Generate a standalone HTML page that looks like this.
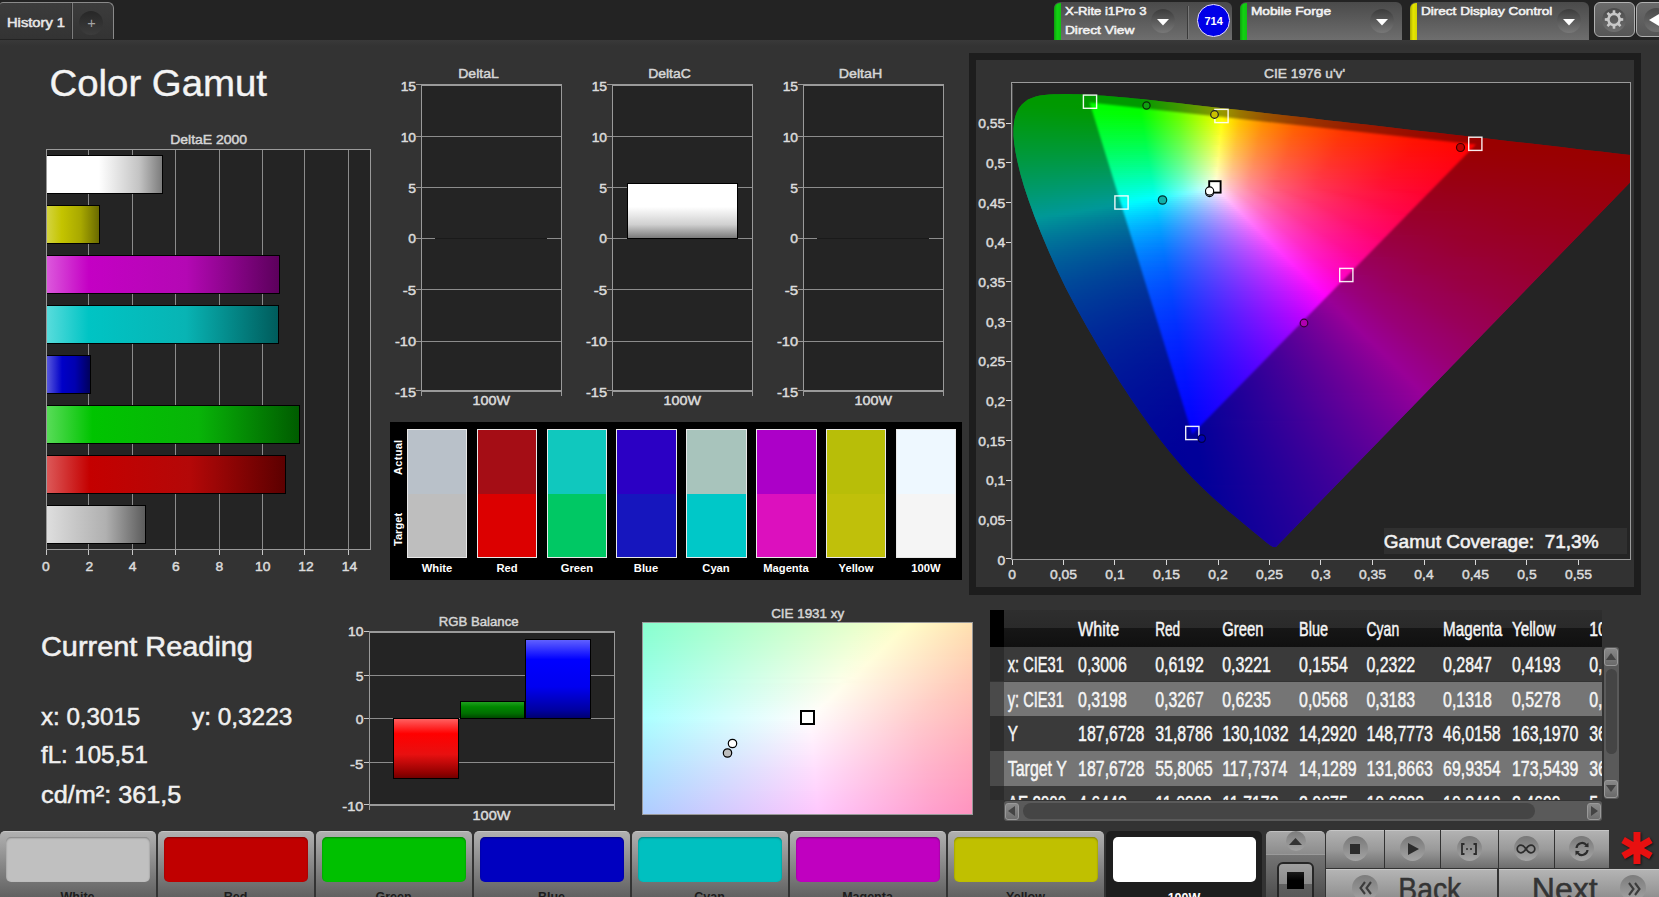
<!DOCTYPE html>
<html><head><meta charset="utf-8"><title>Color Gamut</title>
<style>
html,body{margin:0;padding:0;}
body{width:1659px;height:897px;overflow:hidden;background:#333333;position:relative;font-family:"Liberation Sans",sans-serif;}
.t{position:absolute;white-space:pre;line-height:1;transform-origin:0 0;}
svg{position:absolute;overflow:visible;}
.tx text{white-space:pre;font-family:"Liberation Sans",sans-serif;}
.hs i{position:absolute;left:0;width:100%;height:2px;display:block;}
</style></head><body>
<div style="position:absolute;left:0px;top:0px;width:1659px;height:40px;background:#232323;"></div>
<div style="position:absolute;left:0px;top:40px;width:1659px;height:6px;background:linear-gradient(#393939,#333333);"></div>
<div style="position:absolute;left:0px;top:1.7px;width:114.3px;height:37.5px;background:linear-gradient(#3c3c3c,#333333);border-top:1px solid #8a8a8a;border-right:1px solid #8a8a8a;border-radius:3px 6px 0 0;box-sizing:border-box;"></div>
<div style="position:absolute;left:72px;top:3px;width:1px;height:36px;background:#7c7c7c;"></div>
<div style="position:absolute;left:71px;top:3px;width:1px;height:36px;background:#2e2e2e;"></div>
<div style="position:absolute;left:79.4px;top:10.9px;width:24px;height:24px;border-radius:50%;background:linear-gradient(#272727,#3c3c3c);"></div>
<div style="position:absolute;left:1054px;top:2px;width:178px;height:38px;background:linear-gradient(#4a4a4a,#6e6e6e);border-radius:6px 6px 0 0;"></div>
<div style="position:absolute;left:1054px;top:2.5px;width:7px;height:37.5px;background:linear-gradient(90deg,rgba(0,0,0,0.25),rgba(0,0,0,0) 45%,rgba(0,0,0,0.08)),#12d212;border-radius:6px 0 0 0;"></div>
<div style="position:absolute;left:1151.4px;top:8.9px;width:24px;height:24px;border-radius:50%;background:linear-gradient(#3c3c3c,#787878);"></div>
<svg style="left:1157.4px;top:18.5px" width="12" height="7"><path d="M0 0H12L6 6.6Z" fill="#fff"/></svg>
<div style="position:absolute;left:1187px;top:6px;width:1px;height:33px;background:#3a3a3a;"></div>
<div style="position:absolute;left:1188px;top:6px;width:1px;height:33px;background:#777;"></div>
<div style="position:absolute;left:1197.2px;top:4.3px;width:32.6px;height:32.6px;border-radius:50%;background:#0000e8;border:1.5px solid #e8e0ff;box-sizing:border-box;"></div>
<div style="position:absolute;left:1240px;top:2px;width:162px;height:38px;background:linear-gradient(#4a4a4a,#6e6e6e);border-radius:6px 6px 0 0;"></div>
<div style="position:absolute;left:1240px;top:2.5px;width:7px;height:37.5px;background:linear-gradient(90deg,rgba(0,0,0,0.25),rgba(0,0,0,0) 45%,rgba(0,0,0,0.08)),#12d212;border-radius:6px 0 0 0;"></div>
<div style="position:absolute;left:1370px;top:8.9px;width:24px;height:24px;border-radius:50%;background:linear-gradient(#3c3c3c,#787878);"></div>
<svg style="left:1376px;top:18.5px" width="12" height="7"><path d="M0 0H12L6 6.6Z" fill="#fff"/></svg>
<div style="position:absolute;left:1410px;top:2px;width:179px;height:38px;background:linear-gradient(#4a4a4a,#6e6e6e);border-radius:6px 6px 0 0;"></div>
<div style="position:absolute;left:1410px;top:2.5px;width:7px;height:37.5px;background:linear-gradient(90deg,rgba(0,0,0,0.25),rgba(0,0,0,0) 45%,rgba(0,0,0,0.08)),#e6e600;border-radius:6px 0 0 0;"></div>
<div style="position:absolute;left:1556.8px;top:8.9px;width:24px;height:24px;border-radius:50%;background:linear-gradient(#3c3c3c,#787878);"></div>
<svg style="left:1562.8px;top:18.5px" width="12" height="7"><path d="M0 0H12L6 6.6Z" fill="#fff"/></svg>
<div style="position:absolute;left:1593.5px;top:2px;width:41px;height:34.5px;background:linear-gradient(#6a6a6a,#565656);border:1px solid #b0b0b0;border-radius:6px;box-sizing:border-box;"></div>
<div style="position:absolute;left:1602px;top:7.5px;width:24px;height:24px;border-radius:50%;background:linear-gradient(#4a4a4a,#707070);"></div>
<svg style="left:0;top:0" width="1659" height="60"><path d="M1623.22 18.26 L1623.22 20.74 L1620.76 20.90 L1619.77 23.29 L1621.39 25.14 L1619.64 26.89 L1617.79 25.27 L1615.40 26.26 L1615.24 28.72 L1612.76 28.72 L1612.60 26.26 L1610.21 25.27 L1608.36 26.89 L1606.61 25.14 L1608.23 23.29 L1607.24 20.90 L1604.78 20.74 L1604.78 18.26 L1607.24 18.10 L1608.23 15.71 L1606.61 13.86 L1608.36 12.11 L1610.21 13.73 L1612.60 12.74 L1612.76 10.28 L1615.24 10.28 L1615.40 12.74 L1617.79 13.73 L1619.64 12.11 L1621.39 13.86 L1619.77 15.71 L1620.76 18.10Z M1618.30 19.50 A4.3 4.3 0 1 0 1609.70 19.50 A4.3 4.3 0 1 0 1618.30 19.50Z" fill="#c8c8c8" fill-rule="evenodd"/></svg>
<div style="position:absolute;left:1636px;top:2px;width:41px;height:34.5px;background:linear-gradient(#6a6a6a,#565656);border:1px solid #b0b0b0;border-radius:6px;box-sizing:border-box;"></div>
<div style="position:absolute;left:1643.5px;top:7.5px;width:24px;height:24px;border-radius:50%;background:linear-gradient(#4a4a4a,#707070);"></div>
<svg style="left:1649px;top:13.5px" width="10" height="12"><path d="M0 6L10 0V12Z" fill="#fff"/></svg>
<div style="position:absolute;left:46px;top:149px;width:325px;height:401px;background:#242424;border:1px solid #9a9a9a;box-sizing:border-box;"></div>
<div style="position:absolute;left:88px;top:150px;width:1px;height:399px;background:#8c8c8c;"></div>
<div style="position:absolute;left:88px;top:550px;width:1px;height:5px;background:#c8c8c8;"></div>
<div style="position:absolute;left:132px;top:150px;width:1px;height:399px;background:#8c8c8c;"></div>
<div style="position:absolute;left:132px;top:550px;width:1px;height:5px;background:#c8c8c8;"></div>
<div style="position:absolute;left:175px;top:150px;width:1px;height:399px;background:#8c8c8c;"></div>
<div style="position:absolute;left:175px;top:550px;width:1px;height:5px;background:#c8c8c8;"></div>
<div style="position:absolute;left:219px;top:150px;width:1px;height:399px;background:#8c8c8c;"></div>
<div style="position:absolute;left:219px;top:550px;width:1px;height:5px;background:#c8c8c8;"></div>
<div style="position:absolute;left:262px;top:150px;width:1px;height:399px;background:#8c8c8c;"></div>
<div style="position:absolute;left:262px;top:550px;width:1px;height:5px;background:#c8c8c8;"></div>
<div style="position:absolute;left:304px;top:150px;width:1px;height:399px;background:#8c8c8c;"></div>
<div style="position:absolute;left:304px;top:550px;width:1px;height:5px;background:#c8c8c8;"></div>
<div style="position:absolute;left:348px;top:150px;width:1px;height:399px;background:#8c8c8c;"></div>
<div style="position:absolute;left:348px;top:550px;width:1px;height:5px;background:#c8c8c8;"></div>
<div style="position:absolute;left:46px;top:550px;width:1px;height:5px;background:#c8c8c8;"></div>
<div style="position:absolute;left:47px;top:155px;width:116.09719999999999px;height:38.5px;background:linear-gradient(90deg,#ffffff,#ffffff 45%,#c4c4c4 80%,#7c7c7c);border:1px solid #000;border-left:none;box-sizing:border-box;"></div>
<div style="position:absolute;left:47px;top:205px;width:53.008399999999995px;height:38.5px;background:linear-gradient(90deg,#d4d440,#c4c400 28%,#a8a800 65%,#6a6a00);border:1px solid #000;border-left:none;box-sizing:border-box;"></div>
<div style="position:absolute;left:47px;top:255px;width:232.844px;height:38.5px;background:linear-gradient(90deg,#dc58dc,#c400c4 18%,#b408b4 60%,#5c005c);border:1px solid #000;border-left:none;box-sizing:border-box;"></div>
<div style="position:absolute;left:47px;top:305px;width:231.5432px;height:38.5px;background:linear-gradient(90deg,#58dcdc,#00c4c4 18%,#08b4b4 60%,#005c5c);border:1px solid #000;border-left:none;box-sizing:border-box;"></div>
<div style="position:absolute;left:47px;top:355px;width:43.52340000000001px;height:38.5px;background:linear-gradient(90deg,#5858dc,#0000c8 35%,#0000b0 65%,#00005c);border:1px solid #000;border-left:none;box-sizing:border-box;"></div>
<div style="position:absolute;left:47px;top:405px;width:252.731064px;height:38.5px;background:linear-gradient(90deg,#58dc58,#00c400 18%,#08b408 60%,#005c00);border:1px solid #000;border-left:none;box-sizing:border-box;"></div>
<div style="position:absolute;left:47px;top:455px;width:239.13119999999998px;height:38.5px;background:linear-gradient(90deg,#dc5858,#c40000 18%,#b40808 60%,#5c0000);border:1px solid #000;border-left:none;box-sizing:border-box;"></div>
<div style="position:absolute;left:47px;top:505px;width:99.38842400000001px;height:38.5px;background:linear-gradient(90deg,#dedede,#c6c6c6 30%,#b0b0b0 60%,#5c5c5c);border:1px solid #000;border-left:none;box-sizing:border-box;"></div>
<div style="position:absolute;left:421px;top:84px;width:141px;height:308px;background:#242424;border:1px solid #9a9a9a;border-top:2px solid #9a9a9a;border-bottom:2px solid #9a9a9a;box-sizing:border-box;"></div>
<div style="position:absolute;left:416px;top:84px;width:5px;height:1px;background:#9a9a9a;"></div>
<div style="position:absolute;left:422px;top:136px;width:139px;height:1px;background:#8c8c8c;"></div>
<div style="position:absolute;left:416px;top:136px;width:5px;height:1px;background:#9a9a9a;"></div>
<div style="position:absolute;left:422px;top:187px;width:139px;height:1px;background:#8c8c8c;"></div>
<div style="position:absolute;left:416px;top:187px;width:5px;height:1px;background:#9a9a9a;"></div>
<div style="position:absolute;left:422px;top:238px;width:139px;height:1px;background:#8c8c8c;"></div>
<div style="position:absolute;left:416px;top:238px;width:5px;height:1px;background:#9a9a9a;"></div>
<div style="position:absolute;left:422px;top:289px;width:139px;height:1px;background:#8c8c8c;"></div>
<div style="position:absolute;left:416px;top:289px;width:5px;height:1px;background:#9a9a9a;"></div>
<div style="position:absolute;left:422px;top:341px;width:139px;height:1px;background:#8c8c8c;"></div>
<div style="position:absolute;left:416px;top:341px;width:5px;height:1px;background:#9a9a9a;"></div>
<div style="position:absolute;left:416px;top:390px;width:5px;height:1px;background:#9a9a9a;"></div>
<div style="position:absolute;left:421px;top:392px;width:1px;height:4px;background:#9a9a9a;"></div>
<div style="position:absolute;left:561px;top:392px;width:1px;height:4px;background:#9a9a9a;"></div>
<div style="position:absolute;left:435px;top:238px;width:112px;height:1px;background:#1a1a1a;"></div>
<div style="position:absolute;left:612px;top:84px;width:141px;height:308px;background:#242424;border:1px solid #9a9a9a;border-top:2px solid #9a9a9a;border-bottom:2px solid #9a9a9a;box-sizing:border-box;"></div>
<div style="position:absolute;left:607px;top:84px;width:5px;height:1px;background:#9a9a9a;"></div>
<div style="position:absolute;left:613px;top:136px;width:139px;height:1px;background:#8c8c8c;"></div>
<div style="position:absolute;left:607px;top:136px;width:5px;height:1px;background:#9a9a9a;"></div>
<div style="position:absolute;left:613px;top:187px;width:139px;height:1px;background:#8c8c8c;"></div>
<div style="position:absolute;left:607px;top:187px;width:5px;height:1px;background:#9a9a9a;"></div>
<div style="position:absolute;left:613px;top:238px;width:139px;height:1px;background:#8c8c8c;"></div>
<div style="position:absolute;left:607px;top:238px;width:5px;height:1px;background:#9a9a9a;"></div>
<div style="position:absolute;left:613px;top:289px;width:139px;height:1px;background:#8c8c8c;"></div>
<div style="position:absolute;left:607px;top:289px;width:5px;height:1px;background:#9a9a9a;"></div>
<div style="position:absolute;left:613px;top:341px;width:139px;height:1px;background:#8c8c8c;"></div>
<div style="position:absolute;left:607px;top:341px;width:5px;height:1px;background:#9a9a9a;"></div>
<div style="position:absolute;left:607px;top:390px;width:5px;height:1px;background:#9a9a9a;"></div>
<div style="position:absolute;left:612px;top:392px;width:1px;height:4px;background:#9a9a9a;"></div>
<div style="position:absolute;left:752px;top:392px;width:1px;height:4px;background:#9a9a9a;"></div>
<div style="position:absolute;left:626.5px;top:183px;width:111.5px;height:56px;background:linear-gradient(#fff,#fff 42%,#d0d0d0 75%,#7a7a7a);border:1px solid #000;box-sizing:border-box;"></div>
<div style="position:absolute;left:803px;top:84px;width:141px;height:308px;background:#242424;border:1px solid #9a9a9a;border-top:2px solid #9a9a9a;border-bottom:2px solid #9a9a9a;box-sizing:border-box;"></div>
<div style="position:absolute;left:798px;top:84px;width:5px;height:1px;background:#9a9a9a;"></div>
<div style="position:absolute;left:804px;top:136px;width:139px;height:1px;background:#8c8c8c;"></div>
<div style="position:absolute;left:798px;top:136px;width:5px;height:1px;background:#9a9a9a;"></div>
<div style="position:absolute;left:804px;top:187px;width:139px;height:1px;background:#8c8c8c;"></div>
<div style="position:absolute;left:798px;top:187px;width:5px;height:1px;background:#9a9a9a;"></div>
<div style="position:absolute;left:804px;top:238px;width:139px;height:1px;background:#8c8c8c;"></div>
<div style="position:absolute;left:798px;top:238px;width:5px;height:1px;background:#9a9a9a;"></div>
<div style="position:absolute;left:804px;top:289px;width:139px;height:1px;background:#8c8c8c;"></div>
<div style="position:absolute;left:798px;top:289px;width:5px;height:1px;background:#9a9a9a;"></div>
<div style="position:absolute;left:804px;top:341px;width:139px;height:1px;background:#8c8c8c;"></div>
<div style="position:absolute;left:798px;top:341px;width:5px;height:1px;background:#9a9a9a;"></div>
<div style="position:absolute;left:798px;top:390px;width:5px;height:1px;background:#9a9a9a;"></div>
<div style="position:absolute;left:803px;top:392px;width:1px;height:4px;background:#9a9a9a;"></div>
<div style="position:absolute;left:943px;top:392px;width:1px;height:4px;background:#9a9a9a;"></div>
<div style="position:absolute;left:817px;top:238px;width:112px;height:1px;background:#1a1a1a;"></div>
<div style="position:absolute;left:390px;top:422px;width:572px;height:158px;background:#000;"></div>
<div style="position:absolute;left:407px;top:429px;width:60px;height:129px;background:linear-gradient(#b9c1c9 50.4%,#bebebe 50.4%);border:1px solid #e8e8e8;box-sizing:border-box;"></div>
<div style="position:absolute;left:477px;top:429px;width:60px;height:129px;background:linear-gradient(#a50d15 50.4%,#dc0000 50.4%);border:1px solid #e8e8e8;box-sizing:border-box;"></div>
<div style="position:absolute;left:547px;top:429px;width:60px;height:129px;background:linear-gradient(#10c8be 50.4%,#00c864 50.4%);border:1px solid #e8e8e8;box-sizing:border-box;"></div>
<div style="position:absolute;left:616px;top:429px;width:61px;height:129px;background:linear-gradient(#2b00c4 50.4%,#1616be 50.4%);border:1px solid #e8e8e8;box-sizing:border-box;"></div>
<div style="position:absolute;left:686px;top:429px;width:61px;height:129px;background:linear-gradient(#a8c4bc 50.4%,#00c8c8 50.4%);border:1px solid #e8e8e8;box-sizing:border-box;"></div>
<div style="position:absolute;left:756px;top:429px;width:61px;height:129px;background:linear-gradient(#ac00c8 50.4%,#dc10be 50.4%);border:1px solid #e8e8e8;box-sizing:border-box;"></div>
<div style="position:absolute;left:826px;top:429px;width:60px;height:129px;background:linear-gradient(#b8be08 50.4%,#c0c00a 50.4%);border:1px solid #e8e8e8;box-sizing:border-box;"></div>
<div style="position:absolute;left:896px;top:429px;width:60px;height:129px;background:linear-gradient(#eef8ff 50.4%,#f5f5f5 50.4%);border:1px solid #e8e8e8;box-sizing:border-box;"></div>
<div class="t" style="left:393.3px;top:474.5px;font-size:11.1px;letter-spacing:0.25px;font-weight:bold;color:#fff;transform-origin:0 0;transform:rotate(-90deg);">Actual</div>
<div class="t" style="left:393.3px;top:545.8px;font-size:11.1px;font-weight:bold;color:#fff;transform-origin:0 0;transform:rotate(-90deg);">Target</div>
<div style="position:absolute;left:969px;top:53px;width:672px;height:542px;background:#1d1d1d;"></div>
<div style="position:absolute;left:976px;top:60px;width:658px;height:527px;background:#323232;"></div>
<div style="position:absolute;left:1012px;top:83px;width:619px;height:477px;background:#242424;"></div>
<div class="hs" style="position:absolute;left:1012px;top:83px;width:619px;height:477px;overflow:hidden;"><div style="position:absolute;left:0;top:0;width:619px;height:477px;clip-path:polygon(264.5px 463.5px,264.3px 463.7px,264.0px 464.0px,263.4px 464.1px,262.5px 464.0px,261.3px 463.9px,259.8px 463.3px,258.1px 462.3px,256.1px 460.8px,253.5px 458.7px,250.3px 456.1px,246.4px 452.8px,241.7px 448.9px,235.7px 443.9px,228.8px 438.2px,222.5px 433.1px,217.8px 429.2px,213.8px 425.9px,209.4px 422.1px,204.4px 417.7px,199.1px 412.9px,193.4px 407.6px,187.4px 401.8px,181.1px 395.5px,174.0px 387.9px,166.1px 378.8px,157.5px 368.5px,148.4px 356.9px,138.7px 344.0px,128.6px 329.8px,118.1px 314.5px,107.3px 297.9px,96.2px 280.1px,85.3px 261.8px,74.4px 243.0px,63.7px 223.8px,53.7px 204.8px,44.7px 186.0px,36.4px 167.6px,29.0px 150.0px,22.5px 133.6px,16.9px 118.1px,12.2px 103.9px,8.5px 91.2px,5.7px 79.8px,3.6px 69.6px,2.2px 60.6px,1.5px 52.7px,1.5px 45.7px,2.0px 39.5px,3.1px 34.0px,4.8px 29.3px,6.9px 25.2px,9.6px 21.7px,12.7px 18.9px,16.0px 16.6px,19.8px 14.9px,23.8px 13.6px,28.0px 12.6px,32.5px 12.0px,37.1px 11.6px,41.8px 11.3px,46.7px 11.2px,51.6px 11.1px,56.4px 11.1px,61.3px 11.2px,66.3px 11.3px,71.3px 11.5px,76.4px 11.7px,81.6px 12.0px,87.0px 12.4px,92.5px 12.8px,98.1px 13.2px,103.9px 13.7px,109.9px 14.2px,116.1px 14.8px,122.4px 15.5px,129.0px 16.1px,135.8px 16.8px,142.9px 17.6px,150.2px 18.4px,157.7px 19.2px,165.5px 20.0px,173.5px 20.9px,181.9px 21.9px,190.5px 22.9px,199.5px 23.9px,208.7px 24.9px,218.2px 26.0px,228.0px 27.1px,238.1px 28.3px,248.5px 29.5px,259.2px 30.7px,270.2px 32.0px,281.5px 33.3px,293.1px 34.6px,304.8px 36.0px,316.9px 37.4px,329.1px 38.8px,341.5px 40.2px,354.0px 41.6px,366.6px 43.1px,379.1px 44.5px,391.4px 46.0px,403.5px 47.4px,415.6px 48.7px,427.6px 50.1px,439.5px 51.5px,451.1px 52.8px,461.3px 54.0px,471.1px 55.1px,483.2px 56.5px,499.8px 58.4px,518.7px 60.6px,535.9px 62.6px,549.1px 64.1px,560.7px 65.4px,573.2px 66.9px,588.5px 68.6px,604.7px 70.5px,618.5px 72.1px,628.9px 73.3px,636.8px 74.2px,642.1px 74.8px);"><i style="top:10px;background:linear-gradient(90deg,#00ff00 30px,#00ff00 83px)"></i><i style="top:12px;background:linear-gradient(90deg,#00ff00 20px,#00ff00 109px)"></i><i style="top:14px;background:linear-gradient(90deg,#00ff00 15px,#03ff00 127px,#08ff00 129px)"></i><i style="top:16px;background:linear-gradient(90deg,#00ff00 11px,#02ff00 127px,#36ff00 148px)"></i><i style="top:18px;background:linear-gradient(90deg,#00ff00 9px,#01ff00 127px,#6aff00 167px)"></i><i style="top:20px;background:linear-gradient(90deg,#00ff03 7px,#03ff00 128px,#6dff00 168px,#9eff00 184px)"></i><i style="top:22px;background:linear-gradient(90deg,#00ff07 5px,#00ff00 84px,#02ff00 128px,#69ff00 167px,#d9ff00 201px,#ddff00 202px)"></i><i style="top:24px;background:linear-gradient(90deg,#00ff0a 4px,#00ff00 98px,#01ff00 128px,#69ff00 167px,#d6ff00 200px,#fffe00 211px,#ffde00 220px)"></i><i style="top:26px;background:linear-gradient(90deg,#00ff0e 3px,#00ff00 117px,#03ff00 129px,#6cff00 168px,#daff00 201px,#fffd00 211px,#ffc300 229px,#ffb000 237px)"></i><i style="top:28px;background:linear-gradient(90deg,#00ff11 2px,#02ff00 129px,#6cff00 168px,#dbff00 201px,#fffd00 211px,#ffc200 229px,#ff8d00 254px)"></i><i style="top:30px;background:linear-gradient(90deg,#00ff15 1px,#02ff01 129px,#6cff00 168px,#dbff00 201px,#fffc00 211px,#ffc200 229px,#ff8d00 254px,#ff7200 272px)"></i><i style="top:32px;background:linear-gradient(90deg,#00ff18 1px,#01ff06 129px,#68ff00 167px,#d8ff00 200px,#ffff00 210px,#ffc400 228px,#ff8f00 252px,#ff5f00 287px,#ff5d00 289px)"></i><i style="top:34px;background:linear-gradient(90deg,#00ff1c 0px,#02ff0a 130px,#6bff02 168px,#d8ff00 200px,#fffe00 210px,#ffc300 228px,#ff8e00 252px,#ff5f00 287px,#ff4d00 306px)"></i><i style="top:36px;background:linear-gradient(90deg,#00ff1f 0px,#02ff0f 130px,#6bff07 168px,#d9ff00 200px,#fffe00 210px,#ffc200 228px,#ff8e00 252px,#ff5e00 287px,#ff3e00 324px)"></i><i style="top:38px;background:linear-gradient(90deg,#00ff23 0px,#01ff14 130px,#6bff0d 168px,#d9ff06 200px,#fffd03 210px,#ffc400 227px,#ff8f00 251px,#ff5f00 285px,#ff3600 336px,#ff3300 341px)"></i><i style="top:40px;background:linear-gradient(90deg,#00ff26 0px,#03ff18 131px,#6aff12 168px,#daff0b 200px,#fffc09 210px,#ffc303 227px,#ff8e00 251px,#ff5f00 285px,#ff3500 336px,#ff2800 359px)"></i><i style="top:42px;background:linear-gradient(90deg,#00ff2a 0px,#02ff1d 131px,#6aff17 168px,#d6ff11 199px,#ffff0f 209px,#ffc208 227px,#ff8d02 251px,#ff5e00 285px,#ff3400 336px,#ff2000 376px)"></i><i style="top:44px;background:linear-gradient(90deg,#00ff2e 0px,#01ff22 131px,#6aff1d 168px,#d7ff17 199px,#ffff15 209px,#ffc40e 226px,#ff9007 249px,#ff6000 282px,#ff3700 331px,#ff1800 393px)"></i><i style="top:46px;background:linear-gradient(90deg,#00ff31 0px,#03ff27 132px,#6dff22 169px,#dbff1d 200px,#fffe1c 209px,#ffc313 226px,#ff8f0b 249px,#ff6004 282px,#ff3600 331px,#ff1200 409px,#ff1200 411px)"></i><i style="top:48px;background:linear-gradient(90deg,#00ff35 0px,#02ff2c 132px,#69ff28 168px,#d8ff24 199px,#fffd22 209px,#ffc218 226px,#ff8e0f 249px,#ff5f07 282px,#ff3500 332px,#ff1100 411px,#ff0c00 428px)"></i><i style="top:50px;background:linear-gradient(90deg,#00ff39 0px,#01ff31 132px,#69ff2d 168px,#d8ff2a 199px,#fffc28 209px,#ffc21d 226px,#ff8d13 249px,#ff5e0a 282px,#ff3402 332px,#ff1100 411px,#ff0700 445px)"></i><i style="top:52px;background:linear-gradient(90deg,#00ff3c 0px,#03ff36 133px,#6cff33 169px,#d9ff30 199px,#feff2f 208px,#ffc122 226px,#ff8c17 249px,#ff5d0d 282px,#ff3404 332px,#ff1000 412px,#ff0200 463px)"></i><i style="top:54px;background:linear-gradient(90deg,#00ff40 0px,#02ff3b 133px,#6cff39 169px,#d9ff37 199px,#ffff36 208px,#ffc628 224px,#ff911c 246px,#ff6111 278px,#ff3808 325px,#ff1300 400px,#ff0000 480px)"></i><i style="top:56px;background:linear-gradient(90deg,#00ff44 0px,#01ff40 133px,#68ff3f 168px,#d6ff3d 198px,#fffe3c 208px,#ffc52e 224px,#ff9021 246px,#ff6015 278px,#ff370a 325px,#ff1301 400px,#ff0000 481px,#ff0000 498px)"></i><i style="top:58px;background:linear-gradient(90deg,#00ff48 0px,#03ff45 134px,#6bff45 169px,#daff44 199px,#fffd43 208px,#ffc433 224px,#ff8f25 246px,#ff6018 278px,#ff360c 326px,#ff1203 402px,#ff0000 479px,#ff0000 515px)"></i><i style="top:60px;background:linear-gradient(90deg,#00ff4b 0px,#02ff4b 134px,#6bff4b 169px,#dbff4a 199px,#fffc49 208px,#ffc339 224px,#ff8f29 246px,#ff5f1b 278px,#ff350f 326px,#ff1104 402px,#ff0000 477px,#ff0000 532px)"></i><i style="top:62px;background:linear-gradient(90deg,#00ff4f 0px,#01ff50 134px,#6bff51 169px,#d7ff51 198px,#feff51 207px,#ffc23e 224px,#ff8e2e 246px,#ff5e1f 278px,#ff3411 326px,#ff1106 402px,#ff0000 476px,#ff0000 550px)"></i><i style="top:64px;background:linear-gradient(90deg,#00ff53 0px,#00ff56 134px,#67ff57 168px,#d4ff58 197px,#ffff58 207px,#ffc445 223px,#ff8f33 245px,#ff6023 276px,#ff3615 323px,#ff1209 397px,#ff0002 473px,#ff0000 567px)"></i><i style="top:66px;background:linear-gradient(90deg,#00ff57 1px,#02ff5b 135px,#6aff5d 169px,#d8ff5f 198px,#fffe5f 207px,#ffc34a 223px,#ff8e37 245px,#ff5f26 276px,#ff3517 323px,#ff110a 398px,#ff0003 471px,#ff0000 585px)"></i><i style="top:68px;background:linear-gradient(90deg,#00ff5b 1px,#01ff61 135px,#6aff63 169px,#d9ff66 198px,#fffd66 207px,#ffc250 223px,#ff8d3b 245px,#ff5e2a 276px,#ff341a 323px,#ff100c 398px,#ff0005 469px,#ff0000 602px)"></i><i style="top:70px;background:linear-gradient(90deg,#00ff5f 1px,#00ff67 135px,#6aff6a 169px,#d9ff6d 198px,#fffd6d 207px,#ffc155 223px,#ff8c40 245px,#ff5d2d 276px,#ff341c 323px,#ff100e 398px,#ff0006 468px,#ff0000 618px)"></i><i style="top:72px;background:linear-gradient(90deg,#00ff63 2px,#02ff6d 136px,#69ff70 169px,#d6ff74 197px,#fffc74 207px,#ffc05b 223px,#ff8b44 245px,#ff5c30 276px,#ff331f 323px,#ff0f10 398px,#ff0008 466px,#ff0000 618px)"></i><i style="top:74px;background:linear-gradient(90deg,#00ff67 2px,#01ff73 136px,#69ff77 169px,#d6ff7c 197px,#ffff7d 206px,#ffc362 222px,#ff8e4b 243px,#ff5f36 273px,#ff3623 318px,#ff1213 390px,#ff000a 463px,#ff0000 618px)"></i><i style="top:76px;background:linear-gradient(90deg,#00ff6b 2px,#01ff79 136px,#69ff7e 169px,#d7ff83 197px,#ffff85 206px,#ffc56a 221px,#ff8f50 242px,#ff603a 272px,#ff3626 317px,#ff1215 388px,#ff000b 461px,#ff0000 618px)"></i><i style="top:78px;background:linear-gradient(90deg,#00ff70 3px,#03ff7f 137px,#6cff85 170px,#dcff8b 198px,#fffe8c 206px,#ffc470 221px,#ff8e55 242px,#ff5f3d 272px,#ff3529 317px,#ff1117 388px,#ff000d 459px,#ff0001 618px)"></i><i style="top:80px;background:linear-gradient(90deg,#00ff74 3px,#02ff85 137px,#68ff8b 169px,#d8ff92 197px,#fffd94 206px,#ffc376 221px,#ff8d5a 242px,#ff5e41 272px,#ff342b 317px,#ff1019 389px,#ff000f 457px,#ff0002 618px)"></i><i style="top:82px;background:linear-gradient(90deg,#00ff78 4px,#01ff8b 137px,#68ff92 169px,#d4ff9a 196px,#fffc9b 206px,#ffc27c 221px,#ff8d5f 242px,#ff5d45 272px,#ff332e 317px,#ff101b 389px,#ff0010 455px,#ff0003 618px)"></i><i style="top:84px;background:linear-gradient(90deg,#00ff7d 4px,#03ff92 138px,#6bff9a 170px,#d9ffa2 197px,#feffa5 205px,#ffc182 221px,#ff8c63 242px,#ff5c48 272px,#ff3331 317px,#ff0f1c 389px,#ff0012 453px,#ff0004 618px)"></i><i style="top:86px;background:linear-gradient(90deg,#00ff81 5px,#02ff98 138px,#6bffa1 170px,#daffaa 197px,#ffffad 205px,#ffc38a 220px,#ff8f6b 240px,#ff5f4e 269px,#ff3636 312px,#ff1220 381px,#ff0014 451px,#ff0005 618px)"></i><i style="top:88px;background:linear-gradient(90deg,#00ff85 5px,#01ff9f 138px,#6bffa8 170px,#daffb3 197px,#fffeb5 205px,#ffc692 219px,#ff9071 239px,#ff6154 267px,#ff373a 309px,#ff1323 376px,#ff0016 448px,#ff0006 618px)"></i><i style="top:90px;background:linear-gradient(90deg,#00ff8a 6px,#03ffa5 139px,#6affb0 170px,#d6ffba 196px,#fffdbd 205px,#ffc599 219px,#ff8f76 239px,#ff6058 267px,#ff363d 309px,#ff1225 376px,#ff0018 446px,#ff0007 618px)"></i><i style="top:92px;background:linear-gradient(90deg,#00ff8e 6px,#02ffac 139px,#6affb7 170px,#d7ffc3 196px,#fffcc5 205px,#ffc49f 219px,#ff8e7b 239px,#ff5f5b 267px,#ff3640 309px,#ff1227 376px,#ff001a 444px,#ff0008 618px)"></i><i style="top:94px;background:linear-gradient(90deg,#00ff93 7px,#01ffb3 139px,#6affbf 170px,#d7ffcc 196px,#feffd0 204px,#ffbfa3 220px,#ff8b7f 240px,#ff5c5e 269px,#ff3341 312px,#ff0f28 381px,#ff001b 443px,#ff0009 618px)"></i><i style="top:96px;background:linear-gradient(90deg,#00ff98 7px,#00ffb9 136px,#03ffba 140px,#6affc7 170px,#d8ffd4 196px,#ffffd9 204px,#ffc5af 218px,#ff9089 237px,#ff6166 264px,#ff3748 305px,#ff132d 370px,#ff001d 440px,#ff000a 618px)"></i><i style="top:98px;background:linear-gradient(90deg,#00ff9d 8px,#00ffbe 133px,#02ffc1 140px,#69ffcf 170px,#d8ffdd 196px,#fffee2 204px,#ffc4b6 218px,#ff8f8e 237px,#ff606a 264px,#ff364b 305px,#ff122f 370px,#ff001f 438px,#ff000b 618px)"></i><i style="top:100px;background:linear-gradient(90deg,#00ffa1 9px,#00ffc4 130px,#01ffc8 140px,#69ffd7 170px,#d4ffe6 195px,#fffdea 204px,#ffc3bc 218px,#ff8e93 237px,#ff606e 264px,#ff364e 305px,#ff1231 370px,#ff0021 436px,#ff000c 618px)"></i><i style="top:102px;background:linear-gradient(90deg,#00ffa6 9px,#00ffca 127px,#03ffd0 141px,#6dffdf 171px,#daffef 196px,#fffcf3 204px,#ffc2c3 218px,#ff8d99 237px,#ff5f73 264px,#ff3551 305px,#ff1134 370px,#ff0023 434px,#ff000d 617px)"></i><i style="top:104px;background:linear-gradient(90deg,#00ffab 10px,#00ffd0 125px,#02ffd7 141px,#6cffe8 171px,#dafff9 196px,#fefffe 203px,#ffc1ca 218px,#ff8c9e 237px,#ff5e77 264px,#ff3454 305px,#ff1136 370px,#ff0026 432px,#ff000f 615px)"></i><i style="top:106px;background:linear-gradient(90deg,#00ffb0 10px,#00ffd5 122px,#01ffdf 141px,#68ffef 170px,#d8fcff 196px,#fef4ff 205px,#ffb9cb 220px,#ff859e 240px,#ff5675 269px,#ff2e52 312px,#ff0b34 382px,#ff0027 433px,#ff0010 613px)"></i><i style="top:108px;background:linear-gradient(90deg,#00ffb5 11px,#00ffdb 120px,#00ffe6 141px,#68fff8 170px,#a9faff 186px,#feeaff 207px,#ffafca 223px,#ff7c9c 244px,#ff4e73 275px,#ff274f 322px,#ff0531 399px,#ff0027 442px,#ff0011 611px)"></i><i style="top:110px;background:linear-gradient(90deg,#00ffba 12px,#00ffe1 118px,#02ffee 142px,#6efcff 172px,#fee0ff 209px,#ffa5c8 226px,#ff749a 248px,#ff4872 280px,#ff214e 330px,#ff012f 413px,#ff0015 574px,#ff0012 609px)"></i><i style="top:112px;background:linear-gradient(90deg,#00ffbf 12px,#00ffe7 116px,#01fff6 142px,#46fbff 162px,#fed6ff 211px,#ff9ec9 228px,#ff6d9a 251px,#ff4270 285px,#ff1c4c 338px,#ff0030 417px,#ff0016 579px,#ff0013 607px)"></i><i style="top:114px;background:linear-gradient(90deg,#00ffc5 13px,#00ffed 114px,#00fffe 142px,#bddaff 196px,#ffcafc 214px,#ff95c8 231px,#ff6699 255px,#ff3c6e 291px,#ff174a 348px,#ff0031 419px,#ff0017 580px,#ff0014 606px)"></i><i style="top:116px;background:linear-gradient(90deg,#00ffca 14px,#00fff4 113px,#00fbff 138px,#02f8ff 143px,#bfd1ff 198px,#ffc1fc 216px,#ff8dc6 234px,#ff5f97 259px,#ff366d 297px,#ff1248 357px,#ff0033 420px,#ff0018 579px,#ff0016 604px)"></i><i style="top:118px;background:linear-gradient(90deg,#00ffcf 14px,#00fff9 110px,#00f8ff 130px,#01f0ff 143px,#bdc9ff 199px,#ffb9fc 218px,#ff87c7 236px,#ff5a97 262px,#ff326d 300px,#ff1049 361px,#ff0035 418px,#ff001a 572px,#ff0017 602px)"></i><i style="top:120px;background:linear-gradient(90deg,#00ffd5 15px,#00fcff 112px,#00e9ff 143px,#bec1ff 201px,#ffb1fc 220px,#ff80c6 239px,#ff5496 266px,#ff2d6c 306px,#ff0c47 369px,#ff0037 418px,#ff001b 570px,#ff0018 600px)"></i><i style="top:122px;background:linear-gradient(90deg,#00ffdb 16px,#00fcff 101px,#02e2ff 144px,#bfbaff 203px,#ffaafc 222px,#ff7bc7 241px,#ff5097 268px,#ff2b6d 308px,#ff0b49 371px,#ff0039 416px,#ff001d 563px,#ff0019 598px)"></i><i style="top:124px;background:linear-gradient(90deg,#00ffe0 17px,#00fcff 89px,#01dbff 144px,#bdb3ff 204px,#ffa3fc 224px,#ff76c8 243px,#ff4d99 270px,#ff286e 311px,#ff0949 375px,#ff003b 416px,#ff001f 561px,#ff001b 596px)"></i><i style="top:126px;background:linear-gradient(90deg,#00ffe6 17px,#00fcff 77px,#00d5ff 144px,#bfacff 206px,#ff9cfd 226px,#ff6fc7 246px,#ff4797 274px,#ff246d 316px,#ff0649 382px,#ff003b 421px,#ff001f 568px,#ff001c 594px)"></i><i style="top:128px;background:linear-gradient(90deg,#00ffec 18px,#00fbff 66px,#02ceff 145px,#c0a5ff 208px,#ff95fd 228px,#ff6ac8 248px,#ff4397 277px,#ff216d 320px,#ff0348 388px,#ff002a 505px,#ff001d 592px)"></i><i style="top:130px;background:linear-gradient(90deg,#00fff2 19px,#00fcff 54px,#01c9ff 145px,#be9fff 209px,#ff8ffd 230px,#ff64c6 251px,#ff3f97 280px,#ff1e6d 324px,#ff0148 393px,#ff002a 512px,#ff001f 590px)"></i><i style="top:132px;background:linear-gradient(90deg,#00fff7 19px,#00faff 45px,#00c3ff 145px,#bc99ff 210px,#ff89fd 232px,#ff60c7 253px,#ff3b97 283px,#ff1b6d 328px,#ff0048 399px,#ff0029 521px,#ff0020 588px)"></i><i style="top:134px;background:linear-gradient(90deg,#00fffd 20px,#02bdff 146px,#c093ff 213px,#ff83fd 234px,#ff5cc8 255px,#ff3899 285px,#ff196e 330px,#ff004a 398px,#ff002b 517px,#ff0021 586px)"></i><i style="top:136px;background:linear-gradient(90deg,#00faff 21px,#01b8ff 146px,#bf8dff 214px,#ff7dfd 236px,#ff56c7 258px,#ff3497 289px,#ff156d 335px,#ff004c 398px,#ff002d 515px,#ff0023 584px)"></i><i style="top:138px;background:linear-gradient(90deg,#00f4ff 22px,#03b3ff 147px,#c088ff 216px,#ff78fd 238px,#ff53c8 260px,#ff3199 291px,#ff136e 338px,#ff004f 397px,#ff002f 512px,#ff0024 582px)"></i><i style="top:140px;background:linear-gradient(90deg,#00efff 23px,#02aeff 147px,#be83ff 217px,#ff73fd 240px,#ff4ec7 263px,#ff2d97 295px,#ff106d 343px,#ff0051 396px,#ff0031 509px,#ff0025 580px)"></i><i style="top:142px;background:linear-gradient(90deg,#00e9ff 23px,#01a9ff 147px,#bf7eff 219px,#ff6efd 242px,#ff4ac8 265px,#ff2a97 298px,#ff0e6d 347px,#ff0054 394px,#ff0033 504px,#ff0027 578px)"></i><i style="top:144px;background:linear-gradient(90deg,#00e4ff 24px,#03a4ff 148px,#c079ff 221px,#ff69fd 244px,#ff47c8 267px,#ff2898 300px,#ff0c6e 349px,#ff0056 393px,#ff0036 500px,#ff0028 576px)"></i><i style="top:146px;background:linear-gradient(90deg,#00dfff 25px,#02a0ff 148px,#be74ff 222px,#ff64fd 246px,#ff42c7 270px,#ff2497 304px,#ff096d 355px,#ff0059 393px,#ff0037 499px,#ff002a 574px)"></i><i style="top:148px;background:linear-gradient(90deg,#00daff 26px,#019cff 148px,#bf6fff 224px,#ff5ffd 248px,#ff3fc8 272px,#ff2298 306px,#ff086e 357px,#ff005b 393px,#ff0039 498px,#ff002b 572px)"></i><i style="top:150px;background:linear-gradient(90deg,#00d5ff 26px,#0398ff 149px,#c06bff 226px,#ff5bfd 250px,#ff3bc7 275px,#ff1e97 310px,#ff056d 362px,#ff005a 399px,#ff0038 506px,#ff002c 571px)"></i><i style="top:152px;background:linear-gradient(90deg,#00d0ff 27px,#0294ff 149px,#bf67ff 227px,#ff57fd 252px,#ff38c8 277px,#ff1b97 313px,#ff036d 366px,#ff0049 450px,#ff002e 569px)"></i><i style="top:154px;background:linear-gradient(90deg,#00cbff 28px,#0190ff 149px,#bd63ff 228px,#ff53fd 254px,#ff34c7 280px,#ff1997 316px,#ff016d 370px,#ff0049 455px,#ff002f 567px)"></i><i style="top:156px;background:linear-gradient(90deg,#00c7ff 29px,#038cff 150px,#c15eff 231px,#ff4ffd 256px,#ff31c8 282px,#ff1697 319px,#ff006d 374px,#ff0048 461px,#ff0031 565px)"></i><i style="top:158px;background:linear-gradient(90deg,#00c2ff 30px,#0289ff 150px,#bf5bff 232px,#ff4bfd 258px,#ff2ec8 284px,#ff1498 321px,#ff006e 376px,#ff0049 463px,#ff0032 563px)"></i><i style="top:160px;background:linear-gradient(90deg,#00beff 31px,#0185ff 150px,#be58ff 233px,#ff47fe 260px,#ff2bc7 287px,#ff1197 325px,#ff0071 375px,#ff004c 460px,#ff0034 561px)"></i><i style="top:162px;background:linear-gradient(90deg,#00baff 32px,#0382ff 151px,#c153ff 236px,#ff43fe 262px,#ff28c8 289px,#ff0f97 328px,#ff0074 373px,#ff004f 456px,#ff0035 559px)"></i><i style="top:164px;background:linear-gradient(90deg,#00b6ff 32px,#027eff 151px,#c050ff 237px,#ff40fe 264px,#ff25c7 292px,#ff0d97 331px,#ff0077 372px,#ff0051 454px,#ff0037 557px)"></i><i style="top:166px;background:linear-gradient(90deg,#00b2ff 33px,#017bff 151px,#be4dff 238px,#ff3cfe 266px,#ff22c8 294px,#ff0b97 334px,#ff007a 371px,#ff0054 451px,#ff0039 555px)"></i><i style="top:168px;background:linear-gradient(90deg,#00aeff 34px,#0378ff 152px,#bf49ff 240px,#ff39fe 268px,#ff20c9 296px,#ff0998 336px,#ff007d 370px,#ff0056 449px,#ff003a 553px)"></i><i style="top:170px;background:linear-gradient(90deg,#00abff 35px,#0275ff 152px,#c046ff 242px,#ff36fe 270px,#ff1dc8 299px,#ff0798 340px,#ff007f 371px,#ff0058 449px,#ff003c 551px)"></i><i style="top:172px;background:linear-gradient(90deg,#00a7ff 36px,#0172ff 152px,#bf43ff 243px,#ff33fe 272px,#ff1bc8 301px,#ff0598 342px,#ff007f 374px,#ff0058 453px,#ff003e 549px)"></i><i style="top:174px;background:linear-gradient(90deg,#00a3ff 37px,#036fff 153px,#c040ff 245px,#ff2ffe 274px,#ff18c7 304px,#ff0398 346px,#ff006d 409px,#ff0049 508px,#ff003f 547px)"></i><i style="top:176px;background:linear-gradient(90deg,#00a0ff 38px,#026dff 153px,#c03dff 247px,#ff2cfe 276px,#ff15c8 306px,#ff0198 349px,#ff006d 413px,#ff0048 514px,#ff0041 545px)"></i><i style="top:178px;background:linear-gradient(90deg,#009cff 39px,#016aff 153px,#bf3aff 248px,#ff2afe 278px,#ff13c9 308px,#ff0098 351px,#ff006e 415px,#ff0049 516px,#ff0043 543px)"></i><i style="top:180px;background:linear-gradient(90deg,#0099ff 39px,#0367ff 154px,#c037ff 250px,#ff27fe 280px,#ff11c8 311px,#ff0098 354px,#ff006e 419px,#ff0049 521px,#ff0044 541px)"></i><i style="top:182px;background:linear-gradient(90deg,#0096ff 40px,#0265ff 154px,#bf35ff 251px,#ff24fe 282px,#ff0fc8 313px,#ff009c 353px,#ff0071 417px,#ff004c 517px,#ff0046 539px)"></i><i style="top:184px;background:linear-gradient(90deg,#0093ff 41px,#0162ff 154px,#bf32ff 253px,#ff20fc 285px,#ff0cc6 317px,#ff009f 352px,#ff0074 414px,#ff004f 511px,#ff0048 538px)"></i><i style="top:186px;background:linear-gradient(90deg,#0090ff 42px,#0260ff 155px,#c02fff 255px,#ff1efc 287px,#ff09c6 320px,#ff00a3 351px,#ff0077 412px,#ff0051 507px,#ff0049 536px)"></i><i style="top:188px;background:linear-gradient(90deg,#008dff 43px,#025dff 155px,#bf2dff 256px,#ff1bfc 289px,#ff08c6 322px,#ff00a7 350px,#ff007a 410px,#ff0054 503px,#ff004b 534px)"></i><i style="top:190px;background:linear-gradient(90deg,#008aff 44px,#035bff 156px,#c02aff 258px,#ff19fc 291px,#ff06c7 324px,#ff00a7 352px,#ff007b 413px,#ff0054 507px,#ff004d 532px)"></i><i style="top:192px;background:linear-gradient(90deg,#0087ff 45px,#0259ff 156px,#c028ff 260px,#ff16fc 293px,#ff04c6 327px,#ff0096 375px,#ff006c 447px,#ff004f 530px)"></i><i style="top:194px;background:linear-gradient(90deg,#0084ff 46px,#0257ff 156px,#bf26ff 261px,#ff14fc 295px,#ff02c7 329px,#ff0097 377px,#ff006c 449px,#ff0051 528px)"></i><i style="top:196px;background:linear-gradient(90deg,#0081ff 47px,#0354ff 157px,#c023ff 263px,#ff12fc 297px,#ff00c6 332px,#ff0096 381px,#ff006c 454px,#ff0053 526px)"></i><i style="top:198px;background:linear-gradient(90deg,#007eff 48px,#0252ff 157px,#c121ff 265px,#ff10fc 299px,#ff00c6 334px,#ff0096 384px,#ff006c 458px,#ff0055 524px)"></i><i style="top:200px;background:linear-gradient(90deg,#007cff 49px,#0250ff 157px,#c01fff 266px,#ff0dfc 301px,#ff00c8 335px,#ff0098 385px,#ff006d 459px,#ff0057 522px)"></i><i style="top:202px;background:linear-gradient(90deg,#0079ff 50px,#034eff 158px,#c01dff 268px,#ff0bfc 303px,#ff00ce 333px,#ff009d 381px,#ff0072 452px,#ff0059 520px)"></i><i style="top:204px;background:linear-gradient(90deg,#0077ff 51px,#024cff 158px,#bf1bff 269px,#ff09fc 305px,#ff00d2 332px,#ff00a1 379px,#ff0075 449px,#ff005b 518px)"></i><i style="top:206px;background:linear-gradient(90deg,#0074ff 52px,#024aff 158px,#c019ff 271px,#ff07fc 307px,#ff00d5 332px,#ff00a3 379px,#ff0077 448px,#ff005d 516px)"></i><i style="top:208px;background:linear-gradient(90deg,#0072ff 53px,#0348ff 159px,#c016ff 273px,#ff05fc 309px,#ff00d4 335px,#ff00a2 383px,#ff0077 453px,#ff005f 514px)"></i><i style="top:210px;background:linear-gradient(90deg,#006fff 54px,#0247ff 159px,#bf15ff 274px,#ff03fc 311px,#ff00c7 348px,#ff0097 401px,#ff006d 480px,#ff0061 512px)"></i><i style="top:212px;background:linear-gradient(90deg,#006dff 55px,#0245ff 159px,#c013ff 276px,#ff01fd 313px,#ff00c6 351px,#ff0096 405px,#ff006c 485px,#ff0063 510px)"></i><i style="top:214px;background:linear-gradient(90deg,#006bff 56px,#0343ff 160px,#c111ff 278px,#ff00fd 315px,#ff00c7 353px,#ff0097 407px,#ff006c 488px,#ff0065 508px)"></i><i style="top:216px;background:linear-gradient(90deg,#0068ff 57px,#0241ff 160px,#c00fff 279px,#ff00fd 317px,#ff00c6 356px,#ff0096 411px,#ff006c 493px,#ff0067 506px)"></i><i style="top:218px;background:linear-gradient(90deg,#0066ff 58px,#0240ff 160px,#c00dff 281px,#ff00fe 318px,#ff00c8 357px,#ff0098 412px,#ff006d 494px,#ff0069 505px)"></i><i style="top:220px;background:linear-gradient(90deg,#0064ff 59px,#033eff 161px,#c10bff 283px,#fa00ff 317px,#ff00f6 325px,#ff00c1 366px,#ff0091 425px,#ff006b 503px)"></i><i style="top:222px;background:linear-gradient(90deg,#0062ff 60px,#023dff 161px,#c00aff 284px,#f400ff 315px,#ff00fb 324px,#ff00c6 364px,#ff0096 421px,#ff006d 501px)"></i><i style="top:224px;background:linear-gradient(90deg,#0060ff 61px,#023bff 161px,#bf08ff 285px,#ef00ff 314px,#ff00fb 326px,#ff00c5 367px,#ff0095 425px,#ff0070 499px)"></i><i style="top:226px;background:linear-gradient(90deg,#005eff 62px,#0339ff 162px,#c106ff 288px,#ed00ff 315px,#ff00fb 328px,#ff00c6 369px,#ff0096 427px,#ff0072 497px)"></i><i style="top:228px;background:linear-gradient(90deg,#005bff 64px,#0238ff 162px,#c005ff 289px,#f100ff 319px,#ff00fb 330px,#ff00c5 372px,#ff0095 431px,#ff0074 495px)"></i><i style="top:230px;background:linear-gradient(90deg,#0059ff 65px,#0237ff 162px,#bf03ff 290px,#ff00fd 331px,#ff00c6 373px,#ff0096 432px,#ff0077 493px)"></i><i style="top:232px;background:linear-gradient(90deg,#0057ff 66px,#0335ff 163px,#c002ff 292px,#ff00fd 333px,#ff00c7 375px,#ff0096 435px,#ff0079 491px)"></i><i style="top:234px;background:linear-gradient(90deg,#0055ff 67px,#0234ff 163px,#c000ff 294px,#ff00fd 335px,#ff00c7 377px,#ff0097 437px,#ff007c 489px)"></i><i style="top:236px;background:linear-gradient(90deg,#0054ff 68px,#0232ff 163px,#bf00ff 295px,#ff00fd 337px,#ff00c7 380px,#ff0097 441px,#ff007e 487px)"></i><i style="top:238px;background:linear-gradient(90deg,#0052ff 69px,#0331ff 164px,#c000ff 297px,#ff00fd 339px,#ff00c7 382px,#ff0097 443px,#ff0081 485px)"></i><i style="top:240px;background:linear-gradient(90deg,#0050ff 70px,#022fff 164px,#bc00ff 296px,#ff00fd 341px,#ff00c7 385px,#ff0097 447px,#ff0083 483px)"></i><i style="top:242px;background:linear-gradient(90deg,#004eff 71px,#032eff 165px,#b700ff 294px,#ff00fd 343px,#ff00c7 387px,#ff0097 450px,#ff0086 481px)"></i><i style="top:244px;background:linear-gradient(90deg,#004cff 72px,#032dff 165px,#b300ff 293px,#ff00fd 345px,#ff00c7 389px,#ff0097 452px,#ff0088 479px)"></i><i style="top:246px;background:linear-gradient(90deg,#004aff 74px,#022cff 165px,#ae00ff 291px,#ff00fd 347px,#ff00c7 392px,#ff0097 456px,#ff008b 477px)"></i><i style="top:248px;background:linear-gradient(90deg,#0049ff 75px,#032aff 166px,#a900ff 289px,#ff00fd 349px,#ff00c7 394px,#ff0097 458px,#ff008e 475px)"></i><i style="top:250px;background:linear-gradient(90deg,#0047ff 76px,#0329ff 166px,#a400ff 287px,#ff00fd 351px,#ff00c7 397px,#ff0097 462px,#ff0090 473px)"></i><i style="top:252px;background:linear-gradient(90deg,#0045ff 77px,#0228ff 166px,#9f00ff 285px,#ff00fd 353px,#ff00c7 399px,#ff0097 464px,#ff0093 471px)"></i><i style="top:254px;background:linear-gradient(90deg,#0044ff 78px,#0327ff 167px,#9b00ff 283px,#ff00fd 355px,#ff00c8 401px,#ff0097 467px,#ff0096 470px)"></i><i style="top:256px;background:linear-gradient(90deg,#0042ff 79px,#0325ff 167px,#9600ff 281px,#ff00fd 357px,#ff00c7 404px,#ff0098 468px)"></i><i style="top:258px;background:linear-gradient(90deg,#0040ff 81px,#0224ff 167px,#9300ff 280px,#ff00fd 359px,#ff00c7 406px,#ff009b 466px)"></i><i style="top:260px;background:linear-gradient(90deg,#003fff 82px,#0323ff 168px,#8e00ff 278px,#ff00fc 362px,#ff00c6 410px,#ff009e 464px)"></i><i style="top:262px;background:linear-gradient(90deg,#003dff 83px,#0322ff 168px,#8a00ff 276px,#ff00fc 364px,#ff00c6 412px,#ff00a1 462px)"></i><i style="top:264px;background:linear-gradient(90deg,#003cff 84px,#0221ff 168px,#8600ff 274px,#ff00fc 366px,#ff00c6 415px,#ff00a4 460px)"></i><i style="top:266px;background:linear-gradient(90deg,#003aff 85px,#0320ff 169px,#8200ff 272px,#ff00fc 368px,#ff00c6 417px,#ff00a7 458px)"></i><i style="top:268px;background:linear-gradient(90deg,#0039ff 87px,#021fff 169px,#7e00ff 270px,#ff00fc 370px,#ff00c6 420px,#ff00aa 456px)"></i><i style="top:270px;background:linear-gradient(90deg,#0037ff 88px,#021eff 169px,#7a00ff 268px,#ff00fc 372px,#ff00c6 422px,#ff00ae 454px)"></i><i style="top:272px;background:linear-gradient(90deg,#0036ff 89px,#031dff 170px,#7700ff 267px,#ff00fc 374px,#ff00c6 425px,#ff00b1 452px)"></i><i style="top:274px;background:linear-gradient(90deg,#0035ff 90px,#021cff 170px,#7300ff 265px,#ff00fc 376px,#ff00c6 427px,#ff00b4 450px)"></i><i style="top:276px;background:linear-gradient(90deg,#0033ff 91px,#021bff 170px,#6f00ff 263px,#ff00fc 378px,#ff00c7 429px,#ff00b8 448px)"></i><i style="top:278px;background:linear-gradient(90deg,#0032ff 93px,#031aff 171px,#6b00ff 261px,#ff00fc 380px,#ff00c6 432px,#ff00bb 446px)"></i><i style="top:280px;background:linear-gradient(90deg,#0030ff 94px,#0219ff 171px,#6800ff 259px,#ff00fc 382px,#ff00c6 434px,#ff00be 444px)"></i><i style="top:282px;background:linear-gradient(90deg,#002fff 95px,#0218ff 171px,#6400ff 257px,#ff00fc 384px,#ff00c6 437px,#ff00c2 442px)"></i><i style="top:284px;background:linear-gradient(90deg,#002eff 96px,#0317ff 172px,#6200ff 256px,#ff00fc 386px,#ff00c6 439px,#ff00c6 440px)"></i><i style="top:286px;background:linear-gradient(90deg,#002dff 97px,#0216ff 172px,#5e00ff 254px,#ff00fc 388px,#ff00c9 438px)"></i><i style="top:288px;background:linear-gradient(90deg,#002bff 99px,#0315ff 173px,#5b00ff 252px,#ff00fc 390px,#ff00cc 437px)"></i><i style="top:290px;background:linear-gradient(90deg,#002aff 100px,#0314ff 173px,#5800ff 250px,#ff00fc 392px,#ff00d0 435px)"></i><i style="top:292px;background:linear-gradient(90deg,#0029ff 101px,#0214ff 173px,#5500ff 249px,#ff00fc 394px,#ff00d4 433px)"></i><i style="top:294px;background:linear-gradient(90deg,#0028ff 102px,#0313ff 174px,#5200ff 247px,#ff00fc 396px,#ff00d7 431px)"></i><i style="top:296px;background:linear-gradient(90deg,#0026ff 104px,#0312ff 174px,#4f00ff 245px,#ff00fc 398px,#ff00db 429px)"></i><i style="top:298px;background:linear-gradient(90deg,#0025ff 105px,#0211ff 174px,#4c00ff 243px,#ff00fd 400px,#ff00df 427px)"></i><i style="top:300px;background:linear-gradient(90deg,#0024ff 106px,#0310ff 175px,#4a00ff 242px,#ff00fd 402px,#ff00e4 425px)"></i><i style="top:302px;background:linear-gradient(90deg,#0022ff 108px,#0310ff 175px,#4700ff 240px,#ff00fd 404px,#ff00e8 423px)"></i><i style="top:304px;background:linear-gradient(90deg,#0021ff 109px,#020fff 175px,#4400ff 238px,#ff00fd 406px,#ff00ec 421px)"></i><i style="top:306px;background:linear-gradient(90deg,#0020ff 110px,#030eff 176px,#4200ff 237px,#ff00fd 408px,#ff00f0 419px)"></i><i style="top:308px;background:linear-gradient(90deg,#001fff 111px,#030dff 176px,#3f00ff 235px,#ff00fd 410px,#ff00f5 417px)"></i><i style="top:310px;background:linear-gradient(90deg,#001eff 113px,#020dff 176px,#3c00ff 233px,#fb00ff 407px,#ff00f9 415px)"></i><i style="top:312px;background:linear-gradient(90deg,#001dff 114px,#030cff 177px,#3a00ff 232px,#ff00fe 413px)"></i><i style="top:314px;background:linear-gradient(90deg,#001cff 115px,#030bff 177px,#3800ff 230px,#f700ff 407px,#fc00ff 411px)"></i><i style="top:316px;background:linear-gradient(90deg,#001bff 117px,#020aff 177px,#3600ff 229px,#f600ff 408px,#f700ff 409px)"></i><i style="top:318px;background:linear-gradient(90deg,#001aff 118px,#0309ff 178px,#3300ff 227px,#f200ff 407px)"></i><i style="top:320px;background:linear-gradient(90deg,#0019ff 119px,#0309ff 178px,#3100ff 226px,#ee00ff 405px)"></i><i style="top:322px;background:linear-gradient(90deg,#0017ff 121px,#0208ff 178px,#3000ff 225px,#ea00ff 403px)"></i><i style="top:324px;background:linear-gradient(90deg,#0017ff 122px,#0307ff 179px,#2e00ff 224px,#e700ff 402px)"></i><i style="top:326px;background:linear-gradient(90deg,#0016ff 123px,#0307ff 179px,#2e00ff 224px,#e200ff 400px)"></i><i style="top:328px;background:linear-gradient(90deg,#0014ff 125px,#0306ff 180px,#2d00ff 224px,#de00ff 398px)"></i><i style="top:330px;background:linear-gradient(90deg,#0014ff 126px,#0305ff 180px,#2d00ff 225px,#da00ff 396px)"></i><i style="top:332px;background:linear-gradient(90deg,#0012ff 128px,#0305ff 180px,#2f00ff 228px,#d600ff 394px)"></i><i style="top:334px;background:linear-gradient(90deg,#0011ff 129px,#0304ff 181px,#3d00ff 243px,#d200ff 392px)"></i><i style="top:336px;background:linear-gradient(90deg,#0010ff 131px,#0303ff 181px,#6000ff 280px,#ce00ff 390px)"></i><i style="top:338px;background:linear-gradient(90deg,#000fff 132px,#0303ff 181px,#c000ff 378px,#ca00ff 388px)"></i><i style="top:340px;background:linear-gradient(90deg,#000fff 133px,#0302ff 182px,#c200ff 381px,#c700ff 386px)"></i><i style="top:342px;background:linear-gradient(90deg,#000eff 135px,#0302ff 182px,#c100ff 382px,#c300ff 384px)"></i><i style="top:344px;background:linear-gradient(90deg,#000dff 136px,#0301ff 182px,#bf00ff 382px)"></i><i style="top:346px;background:linear-gradient(90deg,#000cff 138px,#0300ff 183px,#bc00ff 380px)"></i><i style="top:348px;background:linear-gradient(90deg,#000bff 139px,#0300ff 183px,#b800ff 378px)"></i><i style="top:350px;background:linear-gradient(90deg,#000aff 141px,#0200ff 183px,#b500ff 376px)"></i><i style="top:352px;background:linear-gradient(90deg,#0009ff 142px,#0300ff 184px,#b100ff 374px)"></i><i style="top:354px;background:linear-gradient(90deg,#0008ff 144px,#0300ff 184px,#ae00ff 372px)"></i><i style="top:356px;background:linear-gradient(90deg,#0007ff 145px,#0300ff 185px,#aa00ff 370px)"></i><i style="top:358px;background:linear-gradient(90deg,#0006ff 147px,#0300ff 185px,#a800ff 369px)"></i><i style="top:360px;background:linear-gradient(90deg,#0005ff 148px,#0300ff 185px,#a500ff 367px)"></i><i style="top:362px;background:linear-gradient(90deg,#0005ff 150px,#0300ff 186px,#a200ff 365px)"></i><i style="top:364px;background:linear-gradient(90deg,#0004ff 151px,#0300ff 186px,#9e00ff 363px)"></i><i style="top:366px;background:linear-gradient(90deg,#0003ff 153px,#0300ff 186px,#9b00ff 361px)"></i><i style="top:368px;background:linear-gradient(90deg,#0002ff 155px,#0300ff 187px,#9800ff 359px)"></i><i style="top:370px;background:linear-gradient(90deg,#0001ff 156px,#0300ff 187px,#9500ff 357px)"></i><i style="top:372px;background:linear-gradient(90deg,#0000ff 158px,#0300ff 188px,#9200ff 355px)"></i><i style="top:374px;background:linear-gradient(90deg,#0000ff 160px,#0300ff 188px,#8f00ff 353px)"></i><i style="top:376px;background:linear-gradient(90deg,#0000ff 161px,#0300ff 188px,#8c00ff 351px)"></i><i style="top:378px;background:linear-gradient(90deg,#0000ff 163px,#0300ff 189px,#8900ff 349px)"></i><i style="top:380px;background:linear-gradient(90deg,#0000ff 165px,#0300ff 189px,#8700ff 347px)"></i><i style="top:382px;background:linear-gradient(90deg,#0000ff 166px,#0400ff 190px,#8400ff 345px)"></i><i style="top:384px;background:linear-gradient(90deg,#0000ff 168px,#0300ff 190px,#8100ff 343px)"></i><i style="top:386px;background:linear-gradient(90deg,#0000ff 170px,#0400ff 191px,#7e00ff 341px)"></i><i style="top:388px;background:linear-gradient(90deg,#0000ff 172px,#0400ff 191px,#7c00ff 339px)"></i><i style="top:390px;background:linear-gradient(90deg,#0000ff 174px,#0400ff 192px,#7900ff 337px)"></i><i style="top:392px;background:linear-gradient(90deg,#0000ff 175px,#0400ff 192px,#7600ff 335px)"></i><i style="top:394px;background:linear-gradient(90deg,#0000ff 177px,#0400ff 193px,#7500ff 334px)"></i><i style="top:396px;background:linear-gradient(90deg,#0000ff 179px,#0600ff 195px,#7200ff 332px)"></i><i style="top:398px;background:linear-gradient(90deg,#0000ff 181px,#0700ff 197px,#6f00ff 330px)"></i><i style="top:400px;background:linear-gradient(90deg,#0000ff 183px,#0e00ff 207px,#6d00ff 328px)"></i><i style="top:402px;background:linear-gradient(90deg,#0000ff 185px,#6a00ff 326px)"></i><i style="top:404px;background:linear-gradient(90deg,#0000ff 187px,#6800ff 324px)"></i><i style="top:406px;background:linear-gradient(90deg,#0000ff 189px,#6600ff 322px)"></i><i style="top:408px;background:linear-gradient(90deg,#0100ff 191px,#6300ff 320px)"></i><i style="top:410px;background:linear-gradient(90deg,#0200ff 193px,#6100ff 318px)"></i><i style="top:412px;background:linear-gradient(90deg,#0400ff 196px,#5f00ff 316px)"></i><i style="top:414px;background:linear-gradient(90deg,#0500ff 198px,#5c00ff 314px)"></i><i style="top:416px;background:linear-gradient(90deg,#0700ff 200px,#5a00ff 312px)"></i><i style="top:418px;background:linear-gradient(90deg,#0800ff 202px,#5800ff 310px)"></i><i style="top:420px;background:linear-gradient(90deg,#0a00ff 205px,#5600ff 308px)"></i><i style="top:422px;background:linear-gradient(90deg,#0b00ff 207px,#5300ff 306px)"></i><i style="top:424px;background:linear-gradient(90deg,#0c00ff 209px,#5100ff 304px)"></i><i style="top:426px;background:linear-gradient(90deg,#0d00ff 211px,#4f00ff 302px)"></i><i style="top:428px;background:linear-gradient(90deg,#0f00ff 214px,#4e00ff 301px)"></i><i style="top:430px;background:linear-gradient(90deg,#1000ff 216px,#4c00ff 299px)"></i><i style="top:432px;background:linear-gradient(90deg,#1200ff 219px,#4900ff 297px)"></i><i style="top:434px;background:linear-gradient(90deg,#1300ff 221px,#4700ff 295px)"></i><i style="top:436px;background:linear-gradient(90deg,#1500ff 224px,#4500ff 293px)"></i><i style="top:438px;background:linear-gradient(90deg,#1600ff 226px,#4300ff 291px)"></i><i style="top:440px;background:linear-gradient(90deg,#1700ff 228px,#4100ff 289px)"></i><i style="top:442px;background:linear-gradient(90deg,#1800ff 231px,#3f00ff 287px)"></i><i style="top:444px;background:linear-gradient(90deg,#1a00ff 233px,#3d00ff 285px)"></i><i style="top:446px;background:linear-gradient(90deg,#1b00ff 236px,#3c00ff 283px)"></i><i style="top:448px;background:linear-gradient(90deg,#1c00ff 238px,#3a00ff 281px)"></i><i style="top:450px;background:linear-gradient(90deg,#1e00ff 241px,#3800ff 279px)"></i><i style="top:452px;background:linear-gradient(90deg,#1f00ff 243px,#3600ff 277px)"></i><i style="top:454px;background:linear-gradient(90deg,#2000ff 245px,#3400ff 275px)"></i><i style="top:456px;background:linear-gradient(90deg,#2100ff 248px,#3200ff 273px)"></i><i style="top:458px;background:linear-gradient(90deg,#2200ff 250px,#3000ff 271px)"></i><i style="top:460px;background:linear-gradient(90deg,#2400ff 253px,#2f00ff 269px)"></i><i style="top:462px;background:linear-gradient(90deg,#2500ff 255px,#2d00ff 267px)"></i><i style="top:464px;background:linear-gradient(90deg,#2800ff 260px,#2b00ff 265px)"></i><div style="position:absolute;left:0;top:0;width:619px;height:477px;filter:blur(0.9px);"><div style="position:absolute;left:-10px;top:-10px;width:639px;height:497px;background:rgba(0,0,0,0.40);clip-path:polygon(evenodd,0.0px 0.0px,639.0px 0.0px,639.0px 497.0px,0.0px 497.0px,0.0px 0.0px,87.6px 29.5px,474.0px 71.6px,190.2px 361.2px,87.6px 29.5px,0.0px 0.0px);"></div></div></div></div>
<div style="position:absolute;left:1011px;top:82px;width:620px;height:1px;background:#9a9a9a;"></div>
<div style="position:absolute;left:1011px;top:82px;width:1px;height:478px;background:#9a9a9a;"></div>
<div style="position:absolute;left:1012px;top:84px;width:1px;height:475px;background:#4c4c4c;"></div>
<div style="position:absolute;left:1630px;top:82px;width:1px;height:478px;background:#9a9a9a;"></div>
<div style="position:absolute;left:1011px;top:559px;width:620px;height:1px;background:#9a9a9a;"></div>
<div style="position:absolute;left:1012px;top:560px;width:1px;height:5px;background:#d8d8d8;"></div>
<div style="position:absolute;left:1006px;top:558px;width:5px;height:1px;background:#d8d8d8;"></div>
<div style="position:absolute;left:1063px;top:560px;width:1px;height:5px;background:#d8d8d8;"></div>
<div style="position:absolute;left:1006px;top:520px;width:5px;height:1px;background:#d8d8d8;"></div>
<div style="position:absolute;left:1114px;top:560px;width:1px;height:5px;background:#d8d8d8;"></div>
<div style="position:absolute;left:1006px;top:480px;width:5px;height:1px;background:#d8d8d8;"></div>
<div style="position:absolute;left:1166px;top:560px;width:1px;height:5px;background:#d8d8d8;"></div>
<div style="position:absolute;left:1006px;top:440px;width:5px;height:1px;background:#d8d8d8;"></div>
<div style="position:absolute;left:1218px;top:560px;width:1px;height:5px;background:#d8d8d8;"></div>
<div style="position:absolute;left:1006px;top:400px;width:5px;height:1px;background:#d8d8d8;"></div>
<div style="position:absolute;left:1269px;top:560px;width:1px;height:5px;background:#d8d8d8;"></div>
<div style="position:absolute;left:1006px;top:361px;width:5px;height:1px;background:#d8d8d8;"></div>
<div style="position:absolute;left:1320px;top:560px;width:1px;height:5px;background:#d8d8d8;"></div>
<div style="position:absolute;left:1006px;top:321px;width:5px;height:1px;background:#d8d8d8;"></div>
<div style="position:absolute;left:1372px;top:560px;width:1px;height:5px;background:#d8d8d8;"></div>
<div style="position:absolute;left:1006px;top:281px;width:5px;height:1px;background:#d8d8d8;"></div>
<div style="position:absolute;left:1424px;top:560px;width:1px;height:5px;background:#d8d8d8;"></div>
<div style="position:absolute;left:1006px;top:242px;width:5px;height:1px;background:#d8d8d8;"></div>
<div style="position:absolute;left:1475px;top:560px;width:1px;height:5px;background:#d8d8d8;"></div>
<div style="position:absolute;left:1006px;top:202px;width:5px;height:1px;background:#d8d8d8;"></div>
<div style="position:absolute;left:1526px;top:560px;width:1px;height:5px;background:#d8d8d8;"></div>
<div style="position:absolute;left:1006px;top:162px;width:5px;height:1px;background:#d8d8d8;"></div>
<div style="position:absolute;left:1578px;top:560px;width:1px;height:5px;background:#d8d8d8;"></div>
<div style="position:absolute;left:1006px;top:123px;width:5px;height:1px;background:#d8d8d8;"></div>
<svg style="left:0;top:0" width="1659" height="897"><rect x="1083.4" y="95.10000000000001" width="13.2" height="13.2" fill="none" stroke="rgba(255,255,255,0.93)" stroke-width="1.4"/></svg>
<svg style="left:0;top:0" width="1659" height="897"><rect x="1214.9" y="109.4" width="13.2" height="13.2" fill="none" stroke="rgba(255,255,255,0.93)" stroke-width="1.4"/></svg>
<svg style="left:0;top:0" width="1659" height="897"><rect x="1468.7" y="137.20000000000002" width="13.2" height="13.2" fill="none" stroke="rgba(255,255,255,0.93)" stroke-width="1.4"/></svg>
<svg style="left:0;top:0" width="1659" height="897"><rect x="1114.9" y="195.9" width="13.2" height="13.2" fill="none" stroke="rgba(255,255,255,0.93)" stroke-width="1.4"/></svg>
<svg style="left:0;top:0" width="1659" height="897"><rect x="1339.7" y="268.4" width="13.2" height="13.2" fill="none" stroke="rgba(255,255,255,0.93)" stroke-width="1.4"/></svg>
<svg style="left:0;top:0" width="1659" height="897"><rect x="1185.7" y="426.4" width="13.2" height="13.2" fill="none" stroke="rgba(255,255,255,0.93)" stroke-width="1.4"/></svg>
<svg style="left:0;top:0" width="1659" height="897"><rect x="1209.2" y="181.20000000000002" width="11.4" height="11.4" fill="rgba(255,255,255,0.85)" stroke="#000" stroke-width="1.9"/></svg>
<svg style="left:0;top:0" width="1659" height="897"><circle cx="1146.5" cy="105.5" r="3.6" fill="#10a010" stroke="#0a2a0a" stroke-width="1.2"/></svg>
<svg style="left:0;top:0" width="1659" height="897"><circle cx="1214.5" cy="114.5" r="3.8" fill="#c8c000" stroke="#222" stroke-width="1.2"/></svg>
<svg style="left:0;top:0" width="1659" height="897"><circle cx="1460.5" cy="147.5" r="4" fill="#c00000" stroke="#400" stroke-width="1.2"/></svg>
<svg style="left:0;top:0" width="1659" height="897"><circle cx="1162.5" cy="200" r="4.2" fill="#10b0a8" stroke="#033" stroke-width="1.2"/></svg>
<svg style="left:0;top:0" width="1659" height="897"><circle cx="1304" cy="323" r="3.8" fill="#b000b0" stroke="#303" stroke-width="1.2"/></svg>
<svg style="left:0;top:0" width="1659" height="897"><circle cx="1201.7" cy="438.6" r="3.7" fill="#0000b0" stroke="#000048" stroke-width="1.2"/></svg>
<svg style="left:0;top:0" width="1659" height="897"><circle cx="1209.6" cy="192.6" r="4.0" fill="none" stroke="#000" stroke-width="1.1"/></svg>
<svg style="left:0;top:0" width="1659" height="897"><circle cx="1209.6" cy="191.0" r="4.1" fill="#fff" stroke="#000" stroke-width="1.1"/></svg>
<div style="position:absolute;left:1384px;top:528px;width:243px;height:26px;background:#303030;"></div>
<div style="position:absolute;left:369px;top:631px;width:246px;height:175px;background:#242424;border:1px solid #9a9a9a;border-top:2px solid #9a9a9a;border-bottom:2px solid #9a9a9a;box-sizing:border-box;"></div>
<div style="position:absolute;left:364px;top:631px;width:5px;height:1px;background:#c8c8c8;"></div>
<div style="position:absolute;left:370px;top:675px;width:244px;height:1px;background:#8c8c8c;"></div>
<div style="position:absolute;left:364px;top:675px;width:5px;height:1px;background:#c8c8c8;"></div>
<div style="position:absolute;left:370px;top:718px;width:244px;height:1px;background:#8c8c8c;"></div>
<div style="position:absolute;left:364px;top:718px;width:5px;height:1px;background:#c8c8c8;"></div>
<div style="position:absolute;left:370px;top:762px;width:244px;height:1px;background:#8c8c8c;"></div>
<div style="position:absolute;left:364px;top:762px;width:5px;height:1px;background:#c8c8c8;"></div>
<div style="position:absolute;left:364px;top:804px;width:5px;height:1px;background:#c8c8c8;"></div>
<div style="position:absolute;left:369px;top:806px;width:1px;height:4px;background:#9a9a9a;"></div>
<div style="position:absolute;left:614px;top:806px;width:1px;height:4px;background:#9a9a9a;"></div>
<div style="position:absolute;left:393px;top:718px;width:66px;height:60.5px;background:linear-gradient(#ff6060,#ff0000 25%,#e81010 60%,#900000 92%,#700000);border:1px solid #000;box-sizing:border-box;"></div>
<div style="position:absolute;left:460px;top:700.5px;width:65px;height:18.5px;background:linear-gradient(#20a020,#008800 30%,#007000 70%,#004800);border:1px solid #000;box-sizing:border-box;"></div>
<div style="position:absolute;left:525px;top:639px;width:66px;height:80px;background:linear-gradient(#6060ff,#0000ff 25%,#0000f0 60%,#0000a0 90%,#000070);border:1px solid #000;box-sizing:border-box;"></div>
<div style="position:absolute;left:642px;top:622px;width:331px;height:193px;background:#9a9a9a;"></div>
<div class="hs" style="position:absolute;left:643px;top:623px;width:329px;height:191px;overflow:hidden;"><i style="top:0px;background:linear-gradient(90deg,#88ffcf 0px,#e7ffcb 213px,#fffdc8 266px,#ffe1b1 328px)"></i><i style="top:2px;background:linear-gradient(90deg,#89ffd0 0px,#e7ffcc 212px,#fffdc9 264px,#ffe0b1 328px)"></i><i style="top:4px;background:linear-gradient(90deg,#89ffd1 0px,#e8ffcd 211px,#fffdca 262px,#ffdfb1 328px)"></i><i style="top:6px;background:linear-gradient(90deg,#8affd2 0px,#e9ffce 211px,#fffdcb 260px,#ffdeb1 328px)"></i><i style="top:8px;background:linear-gradient(90deg,#8bffd3 0px,#e9ffcf 210px,#fffdcd 257px,#ffddb1 328px)"></i><i style="top:10px;background:linear-gradient(90deg,#8bffd4 0px,#eaffd0 210px,#fffdce 255px,#ffdcb2 328px)"></i><i style="top:12px;background:linear-gradient(90deg,#8cffd4 0px,#ebffd1 209px,#fffdcf 253px,#ffdbb2 328px)"></i><i style="top:14px;background:linear-gradient(90deg,#8dffd5 0px,#ecffd2 209px,#fffdd0 251px,#ffdab2 328px)"></i><i style="top:16px;background:linear-gradient(90deg,#8dffd6 0px,#ecffd3 208px,#fffdd1 249px,#ffd9b2 328px)"></i><i style="top:18px;background:linear-gradient(90deg,#8effd7 0px,#edffd4 207px,#fffdd2 247px,#ffd9b2 328px)"></i><i style="top:20px;background:linear-gradient(90deg,#8fffd8 0px,#eeffd5 207px,#fffdd3 245px,#ffd8b2 328px)"></i><i style="top:22px;background:linear-gradient(90deg,#8fffd9 0px,#eeffd6 206px,#fffdd4 243px,#ffd7b3 328px)"></i><i style="top:24px;background:linear-gradient(90deg,#90ffda 0px,#efffd7 206px,#fffdd5 241px,#ffd6b3 328px)"></i><i style="top:26px;background:linear-gradient(90deg,#91ffdb 0px,#f0ffd8 205px,#fffdd6 239px,#ffd5b3 328px)"></i><i style="top:28px;background:linear-gradient(90deg,#92ffdc 0px,#f1ffd9 205px,#fffdd7 237px,#ffd4b3 328px)"></i><i style="top:30px;background:linear-gradient(90deg,#92ffdd 0px,#f1ffda 204px,#fffdd8 235px,#ffd3b3 328px)"></i><i style="top:32px;background:linear-gradient(90deg,#93ffde 0px,#f2ffdb 203px,#fffdd9 233px,#ffd2b3 328px)"></i><i style="top:34px;background:linear-gradient(90deg,#94ffdf 0px,#f3ffdc 203px,#fffdda 231px,#ffd2b4 328px)"></i><i style="top:36px;background:linear-gradient(90deg,#94ffe0 0px,#f4ffde 202px,#fffddb 228px,#ffd1b4 328px)"></i><i style="top:38px;background:linear-gradient(90deg,#95ffe1 0px,#f5ffdf 202px,#fffddd 226px,#ffd0b4 328px)"></i><i style="top:40px;background:linear-gradient(90deg,#96ffe2 0px,#f5ffe0 201px,#fffdde 224px,#ffcfb4 328px)"></i><i style="top:42px;background:linear-gradient(90deg,#97ffe3 0px,#f6ffe1 201px,#fffddf 222px,#ffceb4 328px)"></i><i style="top:44px;background:linear-gradient(90deg,#97ffe4 0px,#f7ffe2 200px,#fffcdf 221px,#ffcdb4 328px)"></i><i style="top:46px;background:linear-gradient(90deg,#98ffe5 0px,#f7ffe3 199px,#fffce0 219px,#ffccb5 328px)"></i><i style="top:48px;background:linear-gradient(90deg,#99ffe6 0px,#f8ffe4 199px,#fffce1 217px,#ffccb5 327px,#ffcbb5 328px)"></i><i style="top:50px;background:linear-gradient(90deg,#9affe7 0px,#f9ffe5 198px,#fffce3 215px,#ffccb6 325px,#ffcbb5 328px)"></i><i style="top:52px;background:linear-gradient(90deg,#9affe8 0px,#faffe6 198px,#fffce3 214px,#ffcbb7 324px,#ffcab5 328px)"></i><i style="top:54px;background:linear-gradient(90deg,#9bffe9 0px,#fffde6 209px,#ffcdb9 318px,#ffc9b5 328px)"></i><i style="top:56px;background:linear-gradient(90deg,#9cffea 0px,#fcffe9 197px,#fffae4 213px,#ffc9b7 324px,#ffc8b5 328px)"></i><i style="top:58px;background:linear-gradient(90deg,#9dffeb 0px,#fcffea 196px,#fff7e2 217px,#ffc7b6 328px)"></i><i style="top:60px;background:linear-gradient(90deg,#9effec 0px,#fffde9 202px,#ffcdbc 310px,#ffc6b6 328px)"></i><i style="top:62px;background:linear-gradient(90deg,#9effed 0px,#fffdeb 200px,#ffcdbd 308px,#ffc5b6 328px)"></i><i style="top:64px;background:linear-gradient(90deg,#9fffee 0px,#fffdec 198px,#ffcdbe 306px,#ffc5b6 328px)"></i><i style="top:66px;background:linear-gradient(90deg,#a0fff0 0px,#fffded 196px,#ffcdbf 304px,#ffc4b6 328px)"></i><i style="top:68px;background:linear-gradient(90deg,#a1fff1 0px,#fffdee 194px,#ffcdc0 302px,#ffc3b6 328px)"></i><i style="top:70px;background:linear-gradient(90deg,#a1fff2 0px,#fffdef 192px,#ffcdc1 299px,#ffc2b7 328px)"></i><i style="top:72px;background:linear-gradient(90deg,#a2fff3 0px,#fffdf0 190px,#ffcdc2 297px,#ffc1b7 328px)"></i><i style="top:74px;background:linear-gradient(90deg,#a3fff4 0px,#fffdf1 188px,#ffcdc3 295px,#ffc0b7 328px)"></i><i style="top:76px;background:linear-gradient(90deg,#a4fff5 0px,#fffdf2 186px,#ffccc4 293px,#ffc0b7 328px)"></i><i style="top:78px;background:linear-gradient(90deg,#a5fff6 0px,#fffdf4 184px,#ffccc4 291px,#ffbfb7 328px)"></i><i style="top:80px;background:linear-gradient(90deg,#a5fff7 0px,#fffdf5 181px,#ffcdc6 287px,#ffbeb7 328px)"></i><i style="top:82px;background:linear-gradient(90deg,#a6fff8 0px,#fffdf6 179px,#ffcdc7 285px,#ffbdb8 328px)"></i><i style="top:84px;background:linear-gradient(90deg,#a7fff9 0px,#fffdf8 177px,#ffcdc8 283px,#ffbcb8 328px)"></i><i style="top:86px;background:linear-gradient(90deg,#a8fffb 0px,#fffdf9 175px,#ffcdc9 281px,#ffbbb8 328px)"></i><i style="top:88px;background:linear-gradient(90deg,#a9fffc 0px,#fffdfa 173px,#ffcdca 279px,#ffbbb8 328px)"></i><i style="top:90px;background:linear-gradient(90deg,#aafffd 0px,#fffdfb 171px,#ffcdcb 276px,#ffbab8 328px)"></i><i style="top:92px;background:linear-gradient(90deg,#aafffe 0px,#fffdfc 169px,#ffcdcc 274px,#ffb9b8 328px)"></i><i style="top:94px;background:linear-gradient(90deg,#abffff 0px,#fffdfd 167px,#ffcdcd 272px,#ffb8b9 328px)"></i><i style="top:96px;background:linear-gradient(90deg,#abfeff 0px,#fffcfd 167px,#ffcccd 272px,#ffb7b9 328px)"></i><i style="top:98px;background:linear-gradient(90deg,#abfdff 0px,#fffafd 168px,#ffcacc 274px,#ffb7b9 328px)"></i><i style="top:100px;background:linear-gradient(90deg,#abfbff 0px,#fff9fd 168px,#ffc9cd 274px,#ffb6b9 328px)"></i><i style="top:102px;background:linear-gradient(90deg,#abfaff 0px,#fff8fd 168px,#ffc8cd 274px,#ffb5b9 328px)"></i><i style="top:104px;background:linear-gradient(90deg,#acf9ff 0px,#fff7fd 168px,#ffc7cd 274px,#ffb4b9 328px)"></i><i style="top:106px;background:linear-gradient(90deg,#acf8ff 0px,#fff6fd 168px,#ffc6cd 274px,#ffb3ba 328px)"></i><i style="top:108px;background:linear-gradient(90deg,#acf7ff 0px,#fff5fd 168px,#ffc5cd 275px,#ffb3ba 328px)"></i><i style="top:110px;background:linear-gradient(90deg,#acf6ff 0px,#fff3fd 169px,#ffc4cd 276px,#ffb2ba 328px)"></i><i style="top:112px;background:linear-gradient(90deg,#acf5ff 0px,#fff2fd 169px,#ffc3cd 276px,#ffb1ba 328px)"></i><i style="top:114px;background:linear-gradient(90deg,#acf4ff 0px,#fff1fd 169px,#ffc2cd 276px,#ffb0ba 328px)"></i><i style="top:116px;background:linear-gradient(90deg,#acf2ff 0px,#fff0fd 169px,#ffc1cd 276px,#ffafba 328px)"></i><i style="top:118px;background:linear-gradient(90deg,#acf1ff 0px,#ffeffd 169px,#ffc0cd 277px,#ffafba 328px)"></i><i style="top:120px;background:linear-gradient(90deg,#acf0ff 0px,#ffedfd 170px,#ffbfcc 278px,#ffaebb 328px)"></i><i style="top:122px;background:linear-gradient(90deg,#acefff 0px,#ffecfd 170px,#ffbecd 278px,#ffadbb 328px)"></i><i style="top:124px;background:linear-gradient(90deg,#aceeff 0px,#ffebfd 170px,#ffbdcd 278px,#ffacbb 328px)"></i><i style="top:126px;background:linear-gradient(90deg,#acedff 0px,#ffeafd 170px,#ffbccd 278px,#ffacbb 328px)"></i><i style="top:128px;background:linear-gradient(90deg,#acecff 0px,#ffe9fd 170px,#ffbbcd 279px,#ffabbb 328px)"></i><i style="top:130px;background:linear-gradient(90deg,#acebff 0px,#ffe8fd 170px,#ffbacd 279px,#ffaabb 328px)"></i><i style="top:132px;background:linear-gradient(90deg,#adeaff 0px,#ffe6fd 171px,#ffb9cd 280px,#ffa9bc 328px)"></i><i style="top:134px;background:linear-gradient(90deg,#ade9ff 0px,#ffe5fd 171px,#ffb8cd 280px,#ffa8bc 328px)"></i><i style="top:136px;background:linear-gradient(90deg,#ade8ff 0px,#ffe4fd 171px,#ffb7cc 281px,#ffa8bc 328px)"></i><i style="top:138px;background:linear-gradient(90deg,#ade6ff 0px,#ffe3fd 171px,#ffb6cd 281px,#ffa7bc 328px)"></i><i style="top:140px;background:linear-gradient(90deg,#ade5ff 0px,#ffe2fd 171px,#ffb5cd 281px,#ffa6bc 328px)"></i><i style="top:142px;background:linear-gradient(90deg,#ade4ff 0px,#ffe1fd 171px,#ffb4cd 281px,#ffa5bc 328px)"></i><i style="top:144px;background:linear-gradient(90deg,#ade3ff 0px,#ffdffd 172px,#ffb3cd 282px,#ffa5bc 328px)"></i><i style="top:146px;background:linear-gradient(90deg,#ade2ff 0px,#ffdefd 172px,#ffb2cc 283px,#ffa4bd 328px)"></i><i style="top:148px;background:linear-gradient(90deg,#ade1ff 0px,#ffddfd 172px,#ffb1cd 283px,#ffa3bd 328px)"></i><i style="top:150px;background:linear-gradient(90deg,#ade0ff 0px,#ffdcfd 172px,#ffb0cd 283px,#ffa2bd 328px)"></i><i style="top:152px;background:linear-gradient(90deg,#addfff 0px,#ffdbfd 172px,#ffb0cd 283px,#ffa2bd 328px)"></i><i style="top:154px;background:linear-gradient(90deg,#addeff 0px,#ffdafd 172px,#ffafcd 283px,#ffa1bd 328px)"></i><i style="top:156px;background:linear-gradient(90deg,#adddff 0px,#ffd9fd 173px,#ffadcc 285px,#ffa0bd 328px)"></i><i style="top:158px;background:linear-gradient(90deg,#addcff 0px,#ffd8fd 173px,#ffadcc 285px,#ff9fbe 328px)"></i><i style="top:160px;background:linear-gradient(90deg,#addbff 0px,#ffd7fd 173px,#ffaccd 285px,#ff9fbe 328px)"></i><i style="top:162px;background:linear-gradient(90deg,#addaff 0px,#ffd6fd 173px,#ffabcd 285px,#ff9ebe 328px)"></i><i style="top:164px;background:linear-gradient(90deg,#aed9ff 0px,#ffd5fd 173px,#ffaacd 285px,#ff9dbe 328px)"></i><i style="top:166px;background:linear-gradient(90deg,#aed8ff 0px,#ffd4fd 173px,#ffa9cd 285px,#ff9cbe 328px)"></i><i style="top:168px;background:linear-gradient(90deg,#aed7ff 0px,#ffd2fd 174px,#ffa8cc 287px,#ff9cbe 328px)"></i><i style="top:170px;background:linear-gradient(90deg,#aed6ff 0px,#ffd1fd 174px,#ffa7cd 287px,#ff9bbe 328px)"></i><i style="top:172px;background:linear-gradient(90deg,#aed5ff 0px,#ffd0fd 174px,#ffa6cd 287px,#ff9abf 328px)"></i><i style="top:174px;background:linear-gradient(90deg,#aed4ff 0px,#ffcffd 174px,#ffa6cd 287px,#ff99bf 328px)"></i><i style="top:176px;background:linear-gradient(90deg,#aed3ff 0px,#ffcefd 174px,#ffa5cd 287px,#ff99bf 328px)"></i><i style="top:178px;background:linear-gradient(90deg,#aed2ff 0px,#ffcdfd 174px,#ffa4cd 288px,#ff98bf 328px)"></i><i style="top:180px;background:linear-gradient(90deg,#aed1ff 0px,#ffccfd 175px,#ffa3cd 289px,#ff97bf 328px)"></i><i style="top:182px;background:linear-gradient(90deg,#aed0ff 0px,#ffcbfd 175px,#ffa2cd 289px,#ff96bf 328px)"></i><i style="top:184px;background:linear-gradient(90deg,#aecfff 0px,#ffcafd 175px,#ffa1cd 289px,#ff96bf 328px)"></i><i style="top:186px;background:linear-gradient(90deg,#aeceff 0px,#ffc9fd 175px,#ffa0cd 290px,#ff95c0 328px)"></i><i style="top:188px;background:linear-gradient(90deg,#aecdff 0px,#ffc8fd 175px,#ff9fcd 290px,#ff94c0 328px)"></i><i style="top:190px;background:linear-gradient(90deg,#aeccff 0px,#ffc7fd 175px,#ff9ecd 290px,#ff94c0 328px)"></i></div>
<svg style="left:0;top:0" width="1659" height="897"><rect x="801.0" y="711.0" width="13" height="13" fill="#fff" stroke="#000" stroke-width="2"/></svg>
<svg style="left:0;top:0" width="1659" height="897"><circle cx="732.5" cy="743.5" r="4.2" fill="#fff" stroke="#000" stroke-width="1.2"/></svg>
<svg style="left:0;top:0" width="1659" height="897"><circle cx="727.5" cy="753" r="4.2" fill="#bdbdbd" stroke="#000" stroke-width="1.2"/></svg>
<svg class="tx" style="left:0;top:0" width="1659" height="897"><text x="0" y="27.00" font-size="12.6" fill="#e8e8e8" stroke="#e8e8e8" stroke-width="0.5" transform="translate(7.00 0) scale(1.1687 1)">History 1</text><text x="87.17" y="28.40" font-size="14.5" fill="#a4a4a4">+</text><text x="0" y="15.20" font-size="11.8" fill="#f2f2f2" stroke="#f2f2f2" stroke-width="0.55" transform="translate(1064.90 0) scale(1.1109 1)">X-Rite i1Pro 3</text><text x="0" y="34.50" font-size="11.8" fill="#f2f2f2" stroke="#f2f2f2" stroke-width="0.55" transform="translate(1064.90 0) scale(1.1689 1)">Direct View</text><text x="0" y="24.80" font-size="11.5" fill="#fff" font-weight="bold" transform="translate(1204.40 0) scale(0.9589 1)">714</text><text x="0" y="15.20" font-size="11.8" fill="#f2f2f2" stroke="#f2f2f2" stroke-width="0.55" transform="translate(1250.90 0) scale(1.1646 1)">Mobile Forge</text><text x="0" y="15.20" font-size="11.8" fill="#f2f2f2" stroke="#f2f2f2" stroke-width="0.55" transform="translate(1420.90 0) scale(1.1525 1)">Direct Display Control</text><text x="0" y="95.70" font-size="37.8" fill="#f4f4f4" stroke="#f4f4f4" stroke-width="0.4" transform="translate(49.50 0) scale(1.0155 1)">Color Gamut</text><text x="0" y="144.50" font-size="12.5" fill="#d6d6d6" stroke="#d6d6d6" stroke-width="0.45" transform="translate(170.20 0) scale(1.1192 1)">DeltaE 2000</text><text x="0" y="570.60" font-size="13" fill="#dcdcdc" stroke="#dcdcdc" stroke-width="0.45" transform="translate(42.03 0) scale(1.0700 1)">0</text><text x="0" y="570.60" font-size="13" fill="#dcdcdc" stroke="#dcdcdc" stroke-width="0.45" transform="translate(85.39 0) scale(1.0700 1)">2</text><text x="0" y="570.60" font-size="13" fill="#dcdcdc" stroke="#dcdcdc" stroke-width="0.45" transform="translate(128.75 0) scale(1.0700 1)">4</text><text x="0" y="570.60" font-size="13" fill="#dcdcdc" stroke="#dcdcdc" stroke-width="0.45" transform="translate(172.11 0) scale(1.0700 1)">6</text><text x="0" y="570.60" font-size="13" fill="#dcdcdc" stroke="#dcdcdc" stroke-width="0.45" transform="translate(215.47 0) scale(1.0700 1)">8</text><text x="0" y="570.60" font-size="13" fill="#dcdcdc" stroke="#dcdcdc" stroke-width="0.45" transform="translate(254.96 0) scale(1.0700 1)">10</text><text x="0" y="570.60" font-size="13" fill="#dcdcdc" stroke="#dcdcdc" stroke-width="0.45" transform="translate(298.32 0) scale(1.0700 1)">12</text><text x="0" y="570.60" font-size="13" fill="#dcdcdc" stroke="#dcdcdc" stroke-width="0.45" transform="translate(341.68 0) scale(1.0700 1)">14</text><text x="0" y="78.40" font-size="12.4" fill="#d6d6d6" stroke="#d6d6d6" stroke-width="0.45" transform="translate(458.25 0) scale(1.1299 1)">DeltaL</text><text x="0" y="91.00" font-size="13" fill="#dcdcdc" stroke="#dcdcdc" stroke-width="0.45" transform="translate(400.63 0) scale(1.0700 1)">15</text><text x="0" y="142.10" font-size="13" fill="#dcdcdc" stroke="#dcdcdc" stroke-width="0.45" transform="translate(400.63 0) scale(1.0700 1)">10</text><text x="0" y="193.00" font-size="13" fill="#dcdcdc" stroke="#dcdcdc" stroke-width="0.45" transform="translate(408.36 0) scale(1.0700 1)">5</text><text x="0" y="243.50" font-size="13" fill="#dcdcdc" stroke="#dcdcdc" stroke-width="0.45" transform="translate(408.36 0) scale(1.0700 1)">0</text><text x="0" y="295.30" font-size="13" fill="#dcdcdc" stroke="#dcdcdc" stroke-width="0.45" transform="translate(402.73 0) scale(1.1565 1)">-5</text><text x="0" y="345.90" font-size="13" fill="#dcdcdc" stroke="#dcdcdc" stroke-width="0.45" transform="translate(394.99 0) scale(1.1232 1)">-10</text><text x="0" y="396.60" font-size="13" fill="#dcdcdc" stroke="#dcdcdc" stroke-width="0.45" transform="translate(394.99 0) scale(1.1232 1)">-15</text><text x="0" y="405.40" font-size="13" fill="#dcdcdc" stroke="#dcdcdc" stroke-width="0.45" transform="translate(472.55 0) scale(1.1042 1)">100W</text><text x="0" y="78.40" font-size="12.4" fill="#d6d6d6" stroke="#d6d6d6" stroke-width="0.45" transform="translate(648.15 0) scale(1.1266 1)">DeltaC</text><text x="0" y="91.00" font-size="13" fill="#dcdcdc" stroke="#dcdcdc" stroke-width="0.45" transform="translate(591.63 0) scale(1.0700 1)">15</text><text x="0" y="142.10" font-size="13" fill="#dcdcdc" stroke="#dcdcdc" stroke-width="0.45" transform="translate(591.63 0) scale(1.0700 1)">10</text><text x="0" y="193.00" font-size="13" fill="#dcdcdc" stroke="#dcdcdc" stroke-width="0.45" transform="translate(599.36 0) scale(1.0700 1)">5</text><text x="0" y="243.50" font-size="13" fill="#dcdcdc" stroke="#dcdcdc" stroke-width="0.45" transform="translate(599.36 0) scale(1.0700 1)">0</text><text x="0" y="295.30" font-size="13" fill="#dcdcdc" stroke="#dcdcdc" stroke-width="0.45" transform="translate(593.73 0) scale(1.1565 1)">-5</text><text x="0" y="345.90" font-size="13" fill="#dcdcdc" stroke="#dcdcdc" stroke-width="0.45" transform="translate(585.99 0) scale(1.1232 1)">-10</text><text x="0" y="396.60" font-size="13" fill="#dcdcdc" stroke="#dcdcdc" stroke-width="0.45" transform="translate(585.99 0) scale(1.1232 1)">-15</text><text x="0" y="405.40" font-size="13" fill="#dcdcdc" stroke="#dcdcdc" stroke-width="0.45" transform="translate(663.55 0) scale(1.1042 1)">100W</text><text x="0" y="78.40" font-size="12.4" fill="#d6d6d6" stroke="#d6d6d6" stroke-width="0.45" transform="translate(838.75 0) scale(1.1477 1)">DeltaH</text><text x="0" y="91.00" font-size="13" fill="#dcdcdc" stroke="#dcdcdc" stroke-width="0.45" transform="translate(782.63 0) scale(1.0700 1)">15</text><text x="0" y="142.10" font-size="13" fill="#dcdcdc" stroke="#dcdcdc" stroke-width="0.45" transform="translate(782.63 0) scale(1.0700 1)">10</text><text x="0" y="193.00" font-size="13" fill="#dcdcdc" stroke="#dcdcdc" stroke-width="0.45" transform="translate(790.36 0) scale(1.0700 1)">5</text><text x="0" y="243.50" font-size="13" fill="#dcdcdc" stroke="#dcdcdc" stroke-width="0.45" transform="translate(790.36 0) scale(1.0700 1)">0</text><text x="0" y="295.30" font-size="13" fill="#dcdcdc" stroke="#dcdcdc" stroke-width="0.45" transform="translate(784.73 0) scale(1.1565 1)">-5</text><text x="0" y="345.90" font-size="13" fill="#dcdcdc" stroke="#dcdcdc" stroke-width="0.45" transform="translate(776.99 0) scale(1.1232 1)">-10</text><text x="0" y="396.60" font-size="13" fill="#dcdcdc" stroke="#dcdcdc" stroke-width="0.45" transform="translate(776.99 0) scale(1.1232 1)">-15</text><text x="0" y="405.40" font-size="13" fill="#dcdcdc" stroke="#dcdcdc" stroke-width="0.45" transform="translate(854.55 0) scale(1.1042 1)">100W</text><text x="421.76" y="572.30" font-size="11.2" fill="#fff" font-weight="bold">White</text><text x="496.42" y="572.30" font-size="11.2" fill="#fff" font-weight="bold">Red</text><text x="560.82" y="572.30" font-size="11.2" fill="#fff" font-weight="bold">Green</text><text x="633.86" y="572.30" font-size="11.2" fill="#fff" font-weight="bold">Blue</text><text x="702.31" y="572.30" font-size="11.2" fill="#fff" font-weight="bold">Cyan</text><text x="763.28" y="572.30" font-size="11.2" fill="#fff" font-weight="bold">Magenta</text><text x="838.57" y="572.30" font-size="11.2" fill="#fff" font-weight="bold">Yellow</text><text x="911.37" y="572.30" font-size="11.2" fill="#fff" font-weight="bold">100W</text><text x="0" y="77.80" font-size="12.3" fill="#d6d6d6" stroke="#d6d6d6" stroke-width="0.45" transform="translate(1264.00 0) scale(1.1217 1)">CIE 1976 u'v'</text><text x="0" y="579.50" font-size="13" fill="#dcdcdc" stroke="#dcdcdc" stroke-width="0.45" transform="translate(1008.13 0) scale(1.0700 1)">0</text><text x="0" y="564.80" font-size="13" fill="#dcdcdc" stroke="#dcdcdc" stroke-width="0.45" transform="translate(997.56 0) scale(1.0700 1)">0</text><text x="0" y="579.50" font-size="13" fill="#dcdcdc" stroke="#dcdcdc" stroke-width="0.45" transform="translate(1049.96 0) scale(1.0700 1)">0,05</text><text x="0" y="525.13" font-size="13" fill="#dcdcdc" stroke="#dcdcdc" stroke-width="0.45" transform="translate(978.23 0) scale(1.0700 1)">0,05</text><text x="0" y="579.50" font-size="13" fill="#dcdcdc" stroke="#dcdcdc" stroke-width="0.45" transform="translate(1105.33 0) scale(1.0700 1)">0,1</text><text x="0" y="485.45" font-size="13" fill="#dcdcdc" stroke="#dcdcdc" stroke-width="0.45" transform="translate(985.96 0) scale(1.0700 1)">0,1</text><text x="0" y="579.50" font-size="13" fill="#dcdcdc" stroke="#dcdcdc" stroke-width="0.45" transform="translate(1152.96 0) scale(1.0700 1)">0,15</text><text x="0" y="445.78" font-size="13" fill="#dcdcdc" stroke="#dcdcdc" stroke-width="0.45" transform="translate(978.23 0) scale(1.0700 1)">0,15</text><text x="0" y="579.50" font-size="13" fill="#dcdcdc" stroke="#dcdcdc" stroke-width="0.45" transform="translate(1208.33 0) scale(1.0700 1)">0,2</text><text x="0" y="406.10" font-size="13" fill="#dcdcdc" stroke="#dcdcdc" stroke-width="0.45" transform="translate(985.96 0) scale(1.0700 1)">0,2</text><text x="0" y="579.50" font-size="13" fill="#dcdcdc" stroke="#dcdcdc" stroke-width="0.45" transform="translate(1255.96 0) scale(1.0700 1)">0,25</text><text x="0" y="366.43" font-size="13" fill="#dcdcdc" stroke="#dcdcdc" stroke-width="0.45" transform="translate(978.23 0) scale(1.0700 1)">0,25</text><text x="0" y="579.50" font-size="13" fill="#dcdcdc" stroke="#dcdcdc" stroke-width="0.45" transform="translate(1311.33 0) scale(1.0700 1)">0,3</text><text x="0" y="326.75" font-size="13" fill="#dcdcdc" stroke="#dcdcdc" stroke-width="0.45" transform="translate(985.96 0) scale(1.0700 1)">0,3</text><text x="0" y="579.50" font-size="13" fill="#dcdcdc" stroke="#dcdcdc" stroke-width="0.45" transform="translate(1358.96 0) scale(1.0700 1)">0,35</text><text x="0" y="287.08" font-size="13" fill="#dcdcdc" stroke="#dcdcdc" stroke-width="0.45" transform="translate(978.23 0) scale(1.0700 1)">0,35</text><text x="0" y="579.50" font-size="13" fill="#dcdcdc" stroke="#dcdcdc" stroke-width="0.45" transform="translate(1414.33 0) scale(1.0700 1)">0,4</text><text x="0" y="247.40" font-size="13" fill="#dcdcdc" stroke="#dcdcdc" stroke-width="0.45" transform="translate(985.96 0) scale(1.0700 1)">0,4</text><text x="0" y="579.50" font-size="13" fill="#dcdcdc" stroke="#dcdcdc" stroke-width="0.45" transform="translate(1461.96 0) scale(1.0700 1)">0,45</text><text x="0" y="207.73" font-size="13" fill="#dcdcdc" stroke="#dcdcdc" stroke-width="0.45" transform="translate(978.23 0) scale(1.0700 1)">0,45</text><text x="0" y="579.50" font-size="13" fill="#dcdcdc" stroke="#dcdcdc" stroke-width="0.45" transform="translate(1517.33 0) scale(1.0700 1)">0,5</text><text x="0" y="168.05" font-size="13" fill="#dcdcdc" stroke="#dcdcdc" stroke-width="0.45" transform="translate(985.96 0) scale(1.0700 1)">0,5</text><text x="0" y="579.50" font-size="13" fill="#dcdcdc" stroke="#dcdcdc" stroke-width="0.45" transform="translate(1564.96 0) scale(1.0700 1)">0,55</text><text x="0" y="128.38" font-size="13" fill="#dcdcdc" stroke="#dcdcdc" stroke-width="0.45" transform="translate(978.23 0) scale(1.0700 1)">0,55</text><text x="0" y="547.80" font-size="18.6" fill="#f2f2f2" stroke="#f2f2f2" stroke-width="0.55" transform="translate(1383.80 0) scale(1.0244 1)">Gamut Coverage:  71,3%</text><text x="0" y="656.30" font-size="27" fill="#f0f0f0" stroke="#f0f0f0" stroke-width="0.55" transform="translate(41.00 0) scale(1.0701 1)">Current Reading</text><text x="0" y="725.10" font-size="24" fill="#f0f0f0" stroke="#f0f0f0" stroke-width="0.5" transform="translate(41.00 0) scale(1.0056 1)">x: 0,3015</text><text x="0" y="725.10" font-size="24" fill="#f0f0f0" stroke="#f0f0f0" stroke-width="0.5" transform="translate(192.00 0) scale(1.0158 1)">y: 0,3223</text><text x="41" y="762.90" font-size="24" fill="#f0f0f0" stroke="#f0f0f0" stroke-width="0.5">fL: 105,51</text><text x="0" y="803.10" font-size="24" fill="#f0f0f0" stroke="#f0f0f0" stroke-width="0.5" transform="translate(41.00 0) scale(1.0532 1)">cd/m²: 361,5</text><text x="0" y="626.20" font-size="12.5" fill="#d6d6d6" stroke="#d6d6d6" stroke-width="0.45" transform="translate(438.70 0) scale(1.0563 1)">RGB Balance</text><text x="0" y="636.50" font-size="13" fill="#dcdcdc" stroke="#dcdcdc" stroke-width="0.45" transform="translate(347.93 0) scale(1.0700 1)">10</text><text x="0" y="680.80" font-size="13" fill="#dcdcdc" stroke="#dcdcdc" stroke-width="0.45" transform="translate(355.66 0) scale(1.0700 1)">5</text><text x="0" y="724.10" font-size="13" fill="#dcdcdc" stroke="#dcdcdc" stroke-width="0.45" transform="translate(355.66 0) scale(1.0700 1)">0</text><text x="0" y="768.90" font-size="13" fill="#dcdcdc" stroke="#dcdcdc" stroke-width="0.45" transform="translate(350.03 0) scale(1.1565 1)">-5</text><text x="0" y="811.40" font-size="13" fill="#dcdcdc" stroke="#dcdcdc" stroke-width="0.45" transform="translate(342.29 0) scale(1.1232 1)">-10</text><text x="0" y="820.50" font-size="13" fill="#dcdcdc" stroke="#dcdcdc" stroke-width="0.45" transform="translate(472.50 0) scale(1.1189 1)">100W</text><text x="0" y="618.30" font-size="12.5" fill="#d6d6d6" stroke="#d6d6d6" stroke-width="0.45" transform="translate(771.20 0) scale(1.0721 1)">CIE 1931 xy</text></svg>
<div style="position:absolute;left:990px;top:609.5px;width:612px;height:190px;overflow:hidden;">
<div style="position:absolute;left:0;top:0.0px;width:612px;height:37.2px;background:linear-gradient(#2e2e2e,#2a2a2a 48%,#161616 50%,#101010);"></div>
<div style="position:absolute;left:0;top:0.0px;width:13.5px;height:37.2px;background:#000;"></div>
<div style="position:absolute;left:0;top:37.2px;width:612px;height:34.8px;background:#3a3a3a;"></div>
<div style="position:absolute;left:0;top:37.2px;width:13.5px;height:34.8px;background:#2c2c2c;"></div>
<div style="position:absolute;left:0;top:72.0px;width:612px;height:34.5px;background:#757575;"></div>
<div style="position:absolute;left:0;top:72.0px;width:13.5px;height:34.5px;background:#4a4a4a;"></div>
<div style="position:absolute;left:0;top:106.5px;width:612px;height:34.8px;background:#3a3a3a;"></div>
<div style="position:absolute;left:0;top:106.5px;width:13.5px;height:34.8px;background:#2c2c2c;"></div>
<div style="position:absolute;left:0;top:141.3px;width:612px;height:35.2px;background:#757575;"></div>
<div style="position:absolute;left:0;top:141.3px;width:13.5px;height:35.2px;background:#4a4a4a;"></div>
<div style="position:absolute;left:0;top:176.5px;width:612px;height:35.0px;background:#3a3a3a;"></div>
<div style="position:absolute;left:0;top:176.5px;width:13.5px;height:35.0px;background:#2c2c2c;"></div>
<svg class="tx" style="left:0;top:0" width="612" height="190"><text x="0" y="25.65" font-size="20.8" fill="#f6f6f6" stroke="#f6f6f6" stroke-width="0.5" transform="translate(88.10 0) scale(0.7749 1)">White</text><text x="0" y="25.65" font-size="20.8" fill="#f6f6f6" stroke="#f6f6f6" stroke-width="0.5" transform="translate(165.20 0) scale(0.6552 1)">Red</text><text x="0" y="25.65" font-size="20.8" fill="#f6f6f6" stroke="#f6f6f6" stroke-width="0.5" transform="translate(232.20 0) scale(0.7144 1)">Green</text><text x="0" y="25.65" font-size="20.8" fill="#f6f6f6" stroke="#f6f6f6" stroke-width="0.5" transform="translate(309.10 0) scale(0.6966 1)">Blue</text><text x="0" y="25.65" font-size="20.8" fill="#f6f6f6" stroke="#f6f6f6" stroke-width="0.5" transform="translate(376.50 0) scale(0.6734 1)">Cyan</text><text x="0" y="25.65" font-size="20.8" fill="#f6f6f6" stroke="#f6f6f6" stroke-width="0.5" transform="translate(453.10 0) scale(0.7313 1)">Magenta</text><text x="0" y="25.65" font-size="20.8" fill="#f6f6f6" stroke="#f6f6f6" stroke-width="0.5" transform="translate(522.00 0) scale(0.7327 1)">Yellow</text><text x="0" y="25.65" font-size="20.8" fill="#f6f6f6" stroke="#f6f6f6" stroke-width="0.5" transform="translate(599.20 0) scale(0.7655 1)">100W</text><text x="0" y="61.80" font-size="21.8" fill="#f6f6f6" stroke="#f6f6f6" stroke-width="0.5" transform="translate(17.80 0) scale(0.6698 1)">x: CIE31</text><text x="0" y="61.80" font-size="21.8" fill="#f6f6f6" stroke="#f6f6f6" stroke-width="0.5" transform="translate(88.10 0) scale(0.7304 1)">0,3006</text><text x="0" y="61.80" font-size="21.8" fill="#f6f6f6" stroke="#f6f6f6" stroke-width="0.5" transform="translate(165.20 0) scale(0.7304 1)">0,6192</text><text x="0" y="61.80" font-size="21.8" fill="#f6f6f6" stroke="#f6f6f6" stroke-width="0.5" transform="translate(232.20 0) scale(0.7304 1)">0,3221</text><text x="0" y="61.80" font-size="21.8" fill="#f6f6f6" stroke="#f6f6f6" stroke-width="0.5" transform="translate(309.10 0) scale(0.7304 1)">0,1554</text><text x="0" y="61.80" font-size="21.8" fill="#f6f6f6" stroke="#f6f6f6" stroke-width="0.5" transform="translate(376.50 0) scale(0.7304 1)">0,2322</text><text x="0" y="61.80" font-size="21.8" fill="#f6f6f6" stroke="#f6f6f6" stroke-width="0.5" transform="translate(453.10 0) scale(0.7304 1)">0,2847</text><text x="0" y="61.80" font-size="21.8" fill="#f6f6f6" stroke="#f6f6f6" stroke-width="0.5" transform="translate(522.00 0) scale(0.7304 1)">0,4193</text><text x="0" y="61.80" font-size="21.8" fill="#f6f6f6" stroke="#f6f6f6" stroke-width="0.5" transform="translate(599.20 0) scale(0.7304 1)">0,3127</text><text x="0" y="96.60" font-size="21.8" fill="#f6f6f6" stroke="#f6f6f6" stroke-width="0.5" transform="translate(17.80 0) scale(0.6698 1)">y: CIE31</text><text x="0" y="96.60" font-size="21.8" fill="#f6f6f6" stroke="#f6f6f6" stroke-width="0.5" transform="translate(88.10 0) scale(0.7304 1)">0,3198</text><text x="0" y="96.60" font-size="21.8" fill="#f6f6f6" stroke="#f6f6f6" stroke-width="0.5" transform="translate(165.20 0) scale(0.7304 1)">0,3267</text><text x="0" y="96.60" font-size="21.8" fill="#f6f6f6" stroke="#f6f6f6" stroke-width="0.5" transform="translate(232.20 0) scale(0.7304 1)">0,6235</text><text x="0" y="96.60" font-size="21.8" fill="#f6f6f6" stroke="#f6f6f6" stroke-width="0.5" transform="translate(309.10 0) scale(0.7304 1)">0,0568</text><text x="0" y="96.60" font-size="21.8" fill="#f6f6f6" stroke="#f6f6f6" stroke-width="0.5" transform="translate(376.50 0) scale(0.7304 1)">0,3183</text><text x="0" y="96.60" font-size="21.8" fill="#f6f6f6" stroke="#f6f6f6" stroke-width="0.5" transform="translate(453.10 0) scale(0.7304 1)">0,1318</text><text x="0" y="96.60" font-size="21.8" fill="#f6f6f6" stroke="#f6f6f6" stroke-width="0.5" transform="translate(522.00 0) scale(0.7304 1)">0,5278</text><text x="0" y="96.60" font-size="21.8" fill="#f6f6f6" stroke="#f6f6f6" stroke-width="0.5" transform="translate(599.20 0) scale(0.7304 1)">0,3290</text><text x="0" y="131.10" font-size="21.8" fill="#f6f6f6" stroke="#f6f6f6" stroke-width="0.5" transform="translate(17.80 0) scale(0.7000 1)">Y</text><text x="0" y="131.10" font-size="21.8" fill="#f6f6f6" stroke="#f6f6f6" stroke-width="0.5" transform="translate(88.10 0) scale(0.7304 1)">187,6728</text><text x="0" y="131.10" font-size="21.8" fill="#f6f6f6" stroke="#f6f6f6" stroke-width="0.5" transform="translate(165.20 0) scale(0.7304 1)">31,8786</text><text x="0" y="131.10" font-size="21.8" fill="#f6f6f6" stroke="#f6f6f6" stroke-width="0.5" transform="translate(232.20 0) scale(0.7304 1)">130,1032</text><text x="0" y="131.10" font-size="21.8" fill="#f6f6f6" stroke="#f6f6f6" stroke-width="0.5" transform="translate(309.10 0) scale(0.7304 1)">14,2920</text><text x="0" y="131.10" font-size="21.8" fill="#f6f6f6" stroke="#f6f6f6" stroke-width="0.5" transform="translate(376.50 0) scale(0.7304 1)">148,7773</text><text x="0" y="131.10" font-size="21.8" fill="#f6f6f6" stroke="#f6f6f6" stroke-width="0.5" transform="translate(453.10 0) scale(0.7304 1)">46,0158</text><text x="0" y="131.10" font-size="21.8" fill="#f6f6f6" stroke="#f6f6f6" stroke-width="0.5" transform="translate(522.00 0) scale(0.7304 1)">163,1970</text><text x="0" y="131.10" font-size="21.8" fill="#f6f6f6" stroke="#f6f6f6" stroke-width="0.5" transform="translate(599.20 0) scale(0.7304 1)">361,4986</text><text x="0" y="165.90" font-size="21.8" fill="#f6f6f6" stroke="#f6f6f6" stroke-width="0.5" transform="translate(17.80 0) scale(0.7302 1)">Target Y</text><text x="0" y="165.90" font-size="21.8" fill="#f6f6f6" stroke="#f6f6f6" stroke-width="0.5" transform="translate(88.10 0) scale(0.7304 1)">187,6728</text><text x="0" y="165.90" font-size="21.8" fill="#f6f6f6" stroke="#f6f6f6" stroke-width="0.5" transform="translate(165.20 0) scale(0.7304 1)">55,8065</text><text x="0" y="165.90" font-size="21.8" fill="#f6f6f6" stroke="#f6f6f6" stroke-width="0.5" transform="translate(232.20 0) scale(0.7304 1)">117,7374</text><text x="0" y="165.90" font-size="21.8" fill="#f6f6f6" stroke="#f6f6f6" stroke-width="0.5" transform="translate(309.10 0) scale(0.7304 1)">14,1289</text><text x="0" y="165.90" font-size="21.8" fill="#f6f6f6" stroke="#f6f6f6" stroke-width="0.5" transform="translate(376.50 0) scale(0.7304 1)">131,8663</text><text x="0" y="165.90" font-size="21.8" fill="#f6f6f6" stroke="#f6f6f6" stroke-width="0.5" transform="translate(453.10 0) scale(0.7304 1)">69,9354</text><text x="0" y="165.90" font-size="21.8" fill="#f6f6f6" stroke="#f6f6f6" stroke-width="0.5" transform="translate(522.00 0) scale(0.7304 1)">173,5439</text><text x="0" y="165.90" font-size="21.8" fill="#f6f6f6" stroke="#f6f6f6" stroke-width="0.5" transform="translate(599.20 0) scale(0.7304 1)">361,4986</text><text x="0" y="201.10" font-size="21.8" fill="#f6f6f6" stroke="#f6f6f6" stroke-width="0.5" transform="translate(17.80 0) scale(0.7000 1)">ΔE 2000</text><text x="0" y="201.10" font-size="21.8" fill="#f6f6f6" stroke="#f6f6f6" stroke-width="0.5" transform="translate(88.10 0) scale(0.7304 1)">4,6443</text><text x="0" y="201.10" font-size="21.8" fill="#f6f6f6" stroke="#f6f6f6" stroke-width="0.5" transform="translate(165.20 0) scale(0.7304 1)">11,0902</text><text x="0" y="201.10" font-size="21.8" fill="#f6f6f6" stroke="#f6f6f6" stroke-width="0.5" transform="translate(232.20 0) scale(0.7304 1)">11,7173</text><text x="0" y="201.10" font-size="21.8" fill="#f6f6f6" stroke="#f6f6f6" stroke-width="0.5" transform="translate(309.10 0) scale(0.7304 1)">2,0675</text><text x="0" y="201.10" font-size="21.8" fill="#f6f6f6" stroke="#f6f6f6" stroke-width="0.5" transform="translate(376.50 0) scale(0.7304 1)">10,6883</text><text x="0" y="201.10" font-size="21.8" fill="#f6f6f6" stroke="#f6f6f6" stroke-width="0.5" transform="translate(453.10 0) scale(0.7304 1)">10,8413</text><text x="0" y="201.10" font-size="21.8" fill="#f6f6f6" stroke="#f6f6f6" stroke-width="0.5" transform="translate(522.00 0) scale(0.7304 1)">2,4699</text><text x="0" y="201.10" font-size="21.8" fill="#f6f6f6" stroke="#f6f6f6" stroke-width="0.5" transform="translate(599.20 0) scale(0.7304 1)">5,3912</text></svg>
</div>
<div style="position:absolute;left:1603.5px;top:647px;width:15px;height:152px;background:#5a5a5a;border-radius:3px;"></div>
<div style="position:absolute;left:1604px;top:648px;width:14px;height:18px;background:linear-gradient(#888,#6a6a6a);border:1px solid #999;border-radius:3px;box-sizing:border-box;"></div>
<div style="position:absolute;left:1604px;top:780px;width:14px;height:18px;background:linear-gradient(#888,#6a6a6a);border:1px solid #999;border-radius:3px;box-sizing:border-box;"></div>
<svg style="left:1606px;top:653px" width="10" height="8"><path d="M0 7L5 0L10 7Z" fill="#444"/></svg>
<svg style="left:1606px;top:785px" width="10" height="8"><path d="M0 0L5 7L10 0Z" fill="#444"/></svg>
<div style="position:absolute;left:1605.5px;top:668.5px;width:11px;height:85.5px;background:#454545;border-radius:6px;"></div>
<div style="position:absolute;left:1004px;top:801px;width:598px;height:20px;background:#5a5a5a;border-radius:3px;"></div>
<div style="position:absolute;left:1005px;top:802.5px;width:14px;height:17px;background:linear-gradient(#8a8a8a,#6e6e6e);border:1px solid #999;border-radius:3px;box-sizing:border-box;"></div>
<div style="position:absolute;left:1587px;top:802.5px;width:14px;height:17px;background:linear-gradient(#8a8a8a,#6e6e6e);border:1px solid #999;border-radius:3px;box-sizing:border-box;"></div>
<svg style="left:1008px;top:806px" width="8" height="10"><path d="M7 0L0 5L7 10Z" fill="#444"/></svg>
<svg style="left:1591px;top:806px" width="8" height="10"><path d="M0 0L7 5L0 10Z" fill="#444"/></svg>
<div style="position:absolute;left:1022.5px;top:803px;width:512px;height:16px;background:#454545;border-radius:8px;"></div>
<div style="position:absolute;left:0px;top:831px;width:155.5px;height:70px;background:linear-gradient(#b0b0b0,#8a8a8a 45%,#5c5c5c 100%);border-radius:5px 5px 0 0;border-top:1px solid #c4c4c4;box-sizing:border-box;"></div>
<div style="position:absolute;left:6.3px;top:836.7px;width:143.7px;height:45.3px;background:#c0c0c0;border-radius:5px;box-shadow:inset 0 1px 2px rgba(0,0,0,0.35);"></div>
<div style="position:absolute;left:158px;top:831px;width:155.5px;height:70px;background:linear-gradient(#b0b0b0,#8a8a8a 45%,#5c5c5c 100%);border-radius:5px 5px 0 0;border-top:1px solid #c4c4c4;box-sizing:border-box;"></div>
<div style="position:absolute;left:164.3px;top:836.7px;width:143.7px;height:45.3px;background:#c00000;border-radius:5px;box-shadow:inset 0 1px 2px rgba(0,0,0,0.35);"></div>
<div style="position:absolute;left:316px;top:831px;width:155.5px;height:70px;background:linear-gradient(#b0b0b0,#8a8a8a 45%,#5c5c5c 100%);border-radius:5px 5px 0 0;border-top:1px solid #c4c4c4;box-sizing:border-box;"></div>
<div style="position:absolute;left:322.3px;top:836.7px;width:143.7px;height:45.3px;background:#00c000;border-radius:5px;box-shadow:inset 0 1px 2px rgba(0,0,0,0.35);"></div>
<div style="position:absolute;left:474px;top:831px;width:155.5px;height:70px;background:linear-gradient(#b0b0b0,#8a8a8a 45%,#5c5c5c 100%);border-radius:5px 5px 0 0;border-top:1px solid #c4c4c4;box-sizing:border-box;"></div>
<div style="position:absolute;left:480.3px;top:836.7px;width:143.7px;height:45.3px;background:#0000c0;border-radius:5px;box-shadow:inset 0 1px 2px rgba(0,0,0,0.35);"></div>
<div style="position:absolute;left:632px;top:831px;width:155.5px;height:70px;background:linear-gradient(#b0b0b0,#8a8a8a 45%,#5c5c5c 100%);border-radius:5px 5px 0 0;border-top:1px solid #c4c4c4;box-sizing:border-box;"></div>
<div style="position:absolute;left:638.3px;top:836.7px;width:143.7px;height:45.3px;background:#00c0c0;border-radius:5px;box-shadow:inset 0 1px 2px rgba(0,0,0,0.35);"></div>
<div style="position:absolute;left:790px;top:831px;width:155.5px;height:70px;background:linear-gradient(#b0b0b0,#8a8a8a 45%,#5c5c5c 100%);border-radius:5px 5px 0 0;border-top:1px solid #c4c4c4;box-sizing:border-box;"></div>
<div style="position:absolute;left:796.3px;top:836.7px;width:143.7px;height:45.3px;background:#c000c0;border-radius:5px;box-shadow:inset 0 1px 2px rgba(0,0,0,0.35);"></div>
<div style="position:absolute;left:948px;top:831px;width:155.5px;height:70px;background:linear-gradient(#b0b0b0,#8a8a8a 45%,#5c5c5c 100%);border-radius:5px 5px 0 0;border-top:1px solid #c4c4c4;box-sizing:border-box;"></div>
<div style="position:absolute;left:954.3px;top:836.7px;width:143.7px;height:45.3px;background:#c0c000;border-radius:5px;box-shadow:inset 0 1px 2px rgba(0,0,0,0.35);"></div>
<div style="position:absolute;left:1106px;top:830.5px;width:155.5px;height:70px;background:#1e1e1e;border-radius:5px 5px 0 0;"></div>
<div style="position:absolute;left:1112.5px;top:836.8px;width:143px;height:45.2px;background:#fff;border-radius:5px;"></div>
<div style="position:absolute;left:1265.5px;top:830.5px;width:59.5px;height:23px;background:linear-gradient(#a8a8a8,#8c8c8c);border-radius:5px 5px 0 0;border-top:1px solid #c0c0c0;box-sizing:border-box;"></div>
<div style="position:absolute;left:1285.5px;top:831.3px;width:20px;height:20px;border-radius:50%;background:linear-gradient(#7c7c7c,#a2a2a2);"></div>
<svg style="left:1289px;top:837.5px" width="13" height="7"><path d="M0 7L6.5 0L13 7Z" fill="#333"/></svg>
<div style="position:absolute;left:1265.5px;top:854px;width:59.5px;height:46px;background:linear-gradient(#747474,#4c4c4c);border-top:1px solid #9a9a9a;box-sizing:border-box;"></div>
<div style="position:absolute;left:1277px;top:861.5px;width:37px;height:40px;background:linear-gradient(#a0a0a0,#8a8a8a 55%,#606060 56%,#585858);border:2px solid #262626;border-radius:6px;box-sizing:border-box;"></div>
<div style="position:absolute;left:1287px;top:872px;width:17px;height:17px;background:linear-gradient(#1a1a1a,#000 50%);"></div>
<div style="position:absolute;left:1326px;top:829.5px;width:58px;height:38.5px;background:linear-gradient(#b2b2b2,#9a9a9a 50%,#6e6e6e);border-top:1px solid #c6c6c6;box-sizing:border-box;border-radius:5px 0 0 0;"></div>
<div style="position:absolute;left:1342.5px;top:836.4px;width:25px;height:25px;border-radius:50%;background:linear-gradient(#787878,#a4a4a4);"></div>
<div style="position:absolute;left:1350.0px;top:843.9px;width:10px;height:10px;background:#2c2c2c;"></div>
<div style="position:absolute;left:1385px;top:829.5px;width:55px;height:38.5px;background:linear-gradient(#b2b2b2,#9a9a9a 50%,#6e6e6e);border-top:1px solid #c6c6c6;box-sizing:border-box;"></div>
<div style="position:absolute;left:1400.0px;top:836.4px;width:25px;height:25px;border-radius:50%;background:linear-gradient(#787878,#a4a4a4);"></div>
<svg style="left:1408.0px;top:842.9px" width="11" height="12"><path d="M0 0L11 6L0 12Z" fill="#2c2c2c"/></svg>
<div style="position:absolute;left:1441px;top:829.5px;width:56.5px;height:38.5px;background:linear-gradient(#b2b2b2,#9a9a9a 50%,#6e6e6e);border-top:1px solid #c6c6c6;box-sizing:border-box;"></div>
<div style="position:absolute;left:1456.75px;top:836.4px;width:25px;height:25px;border-radius:50%;background:linear-gradient(#787878,#a4a4a4);"></div>
<svg style="left:1461.25px;top:842.9px" width="16" height="12"><path d="M3.5 1H1V11H3.5M12.5 1H15V11H12.5" fill="none" stroke="#2c2c2c" stroke-width="1.8"/><circle cx="6" cy="6" r="1" fill="#2c2c2c"/><circle cx="10" cy="6" r="1" fill="#2c2c2c"/></svg>
<div style="position:absolute;left:1498.5px;top:829.5px;width:55.0px;height:38.5px;background:linear-gradient(#b2b2b2,#9a9a9a 50%,#6e6e6e);border-top:1px solid #c6c6c6;box-sizing:border-box;"></div>
<div style="position:absolute;left:1513.5px;top:836.4px;width:25px;height:25px;border-radius:50%;background:linear-gradient(#787878,#a4a4a4);"></div>
<svg style="left:1517.0px;top:843.9px" width="18" height="10"><path d="M9 5C7 2 5.5 1.2 4 1.2A3.8 3.8 0 0 0 4 8.8C5.5 8.8 7 8 9 5C11 2 12.5 1.2 14 1.2A3.8 3.8 0 0 1 14 8.8C12.5 8.8 11 8 9 5Z" fill="none" stroke="#2c2c2c" stroke-width="1.7"/></svg>
<div style="position:absolute;left:1554.5px;top:829.5px;width:54.5px;height:38.5px;background:linear-gradient(#b2b2b2,#9a9a9a 50%,#6e6e6e);border-top:1px solid #c6c6c6;box-sizing:border-box;"></div>
<div style="position:absolute;left:1569.25px;top:836.4px;width:25px;height:25px;border-radius:50%;background:linear-gradient(#787878,#a4a4a4);"></div>
<svg style="left:1573.75px;top:840.9px" width="16" height="16"><path d="M2.5 7A5.6 5.6 0 0 1 12.5 4.2" fill="none" stroke="#2c2c2c" stroke-width="2.2"/><path d="M10.2 5.8L14.6 6.2L14.4 1.6Z" fill="#2c2c2c"/><path d="M13.5 9A5.6 5.6 0 0 1 3.5 11.8" fill="none" stroke="#2c2c2c" stroke-width="2.2"/><path d="M5.8 10.2L1.4 9.8L1.6 14.4Z" fill="#2c2c2c"/></svg>
<svg style="left:1618px;top:829px" width="38" height="38"><g stroke="#e81010" stroke-width="7" stroke-linecap="butt" style="filter:drop-shadow(1px 1.5px 1px rgba(0,0,0,0.6))"><path d="M19 3V35M5.1 11L32.9 27M5.1 27L32.9 11"/></g></svg>
<div style="position:absolute;left:1326px;top:869px;width:170.5px;height:32px;background:linear-gradient(#b4b4b4,#9c9c9c 60%,#8a8a8a);border-top:1px solid #c8c8c8;box-sizing:border-box;"></div>
<div style="position:absolute;left:1498.5px;top:869px;width:161px;height:32px;background:linear-gradient(#b4b4b4,#9c9c9c 60%,#8a8a8a);border-top:1px solid #c8c8c8;box-sizing:border-box;"></div>
<div style="position:absolute;left:1352.4px;top:874.8px;width:26px;height:26px;border-radius:50%;background:linear-gradient(#7c7c7c,#a2a2a2);"></div>
<div style="position:absolute;left:1620.1px;top:874.8px;width:26px;height:26px;border-radius:50%;background:linear-gradient(#7c7c7c,#a2a2a2);"></div>
<svg style="left:1358.5px;top:881px" width="14" height="14"><path d="M6 1L1.5 7L6 13M12 1L7.5 7L12 13" fill="none" stroke="#3c3c3c" stroke-width="2.1"/></svg>
<svg style="left:1627px;top:881.5px" width="14" height="14"><path d="M2 1L6.5 7L2 13M8 1L12.5 7L8 13" fill="none" stroke="#3c3c3c" stroke-width="2.1"/></svg>
<svg class="tx" style="left:0;top:0" width="1659" height="897"><text x="60.49" y="901.00" font-size="12.5" fill="#1c1c1c" font-weight="bold">White</text><text x="223.69" y="901.00" font-size="12.5" fill="#1c1c1c" font-weight="bold">Red</text><text x="375.44" y="901.00" font-size="12.5" fill="#1c1c1c" font-weight="bold">Green</text><text x="537.96" y="901.00" font-size="12.5" fill="#1c1c1c" font-weight="bold">Blue</text><text x="694.22" y="901.00" font-size="12.5" fill="#1c1c1c" font-weight="bold">Cyan</text><text x="842.15" y="901.00" font-size="12.5" fill="#1c1c1c" font-weight="bold">Magenta</text><text x="1006.05" y="901.00" font-size="12.5" fill="#1c1c1c" font-weight="bold">Yellow</text><text x="1167.67" y="901.50" font-size="12.5" fill="#fff" font-weight="bold">100W</text><text x="0" y="899.90" font-size="30.5" fill="#343434" stroke="#343434" stroke-width="0.5" transform="translate(1398.30 0) scale(0.9291 1)">Back</text><text x="0" y="899.90" font-size="30.5" fill="#343434" stroke="#343434" stroke-width="0.5" transform="translate(1531.80 0) scale(1.0524 1)">Next</text></svg>
</body></html>
